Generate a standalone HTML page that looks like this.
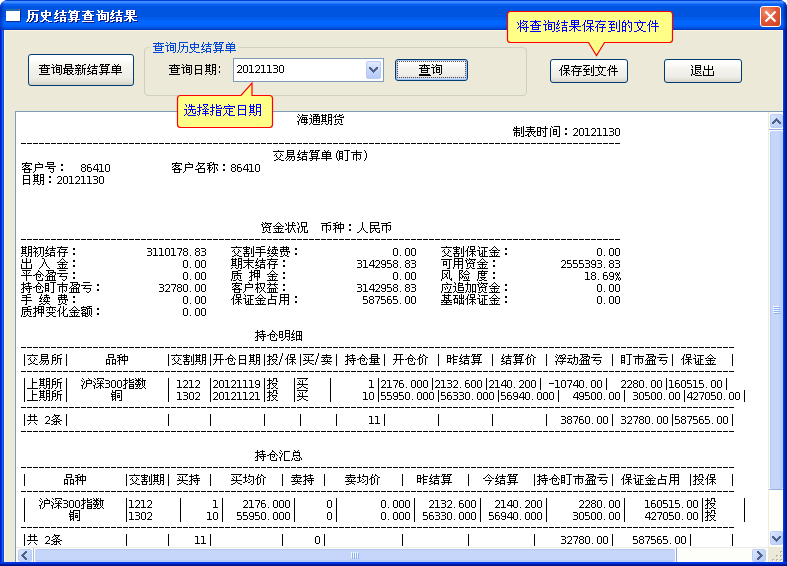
<!DOCTYPE html>
<html><head><meta charset="utf-8"><style>
*{box-sizing:border-box;margin:0;padding:0}
html,body{width:787px;height:566px;overflow:hidden;background:#fff;font-family:"Liberation Sans",sans-serif}
.a{position:absolute}
#win{left:0;top:0;width:787px;height:566px;border-radius:8px 8px 0 0;overflow:hidden;
 background:linear-gradient(to right,#0019CF 0,#0019CF 1px,#0831D9 1px,#0831D9 2px,#166AEE 2px,#166AEE 3px,#0848E0 3px,#0848E0 4px,#0543EF 4px,#0543EF 783px,#0543EF 783px,#0236E0 784px,#001EA8 785px,#001590 786px)}
#title{left:0;top:0;width:787px;height:30px;
 background:linear-gradient(to bottom,#0040D8 0,#0040D8 1px,#3C8CFF 1px,#3C8CFF 3px,#1A70FF 3px,#1A70FF 4px,#0A5EF0 4px,#0A5EF0 6px,#0055E0 6px,#0055E0 17px,#005CEC 17px,#005CEC 20px,#0066FF 20px,#0066FF 25px,#0060F5 25px,#0060F5 27px,#0050E0 27px,#0050E0 29px,#0038C0 29px,#0038C0 30px)}
#client{left:4px;top:30px;width:779px;height:532px;background:#ECE9D8;border-top:1px solid #FFF6DA;border-left:1px solid #FFF9E3;border-right:1px solid #FFF7DA}
#bottom{left:0;top:562px;width:787px;height:4px;background:linear-gradient(to bottom,#0038F0 0,#0038F0 1px,#0030D8 1px,#0030D8 2px,#001A9E 2px,#001A9E 3px,#00138C 3px)}
.btn{border:1px solid #003C74;border-radius:3px;background:linear-gradient(to bottom,#FFFFFF 0,#FEFEFD 15%,#F4F3EE 40%,#EEEDE7 75%,#E3E0D5 90%,#D6D0C5 100%)}
#grp{left:144px;top:47px;width:383px;height:49px;border:1px solid #D0D0BF;border-radius:4px}
#leg{left:149px;top:41px;width:90px;height:13px;background:#ECE9D8}
#combo{left:233px;top:58px;width:151px;height:24px;border:1px solid #7F9DB9;background:#fff}
#ddb{left:366px;top:61px;width:15px;height:18px;border-radius:2px;border:1px solid #B9CBF3;
 background:linear-gradient(to bottom,#E3EBFD,#C6D6FC 50%,#B6CAF8)}
#txt{left:15px;top:111px;width:768px;height:451px;border-left:1px solid #7F9DB9;border-top:1px solid #7F9DB9;background:#fff}
#vs{left:768px;top:112px;width:15px;height:435px;background:linear-gradient(to right,#F3F1EC,#FEFEFB 40%,#FDFDFA 80%,#F0EFE8)}
#hs{left:16px;top:547px;width:752px;height:15px;background:linear-gradient(to bottom,#F0EEE6,#FDFDFA 30%,#FCFCF9 80%,#F3F1EC)}
#grip{left:768px;top:547px;width:15px;height:15px;background:#ECE9D8}
.sbv{border-radius:2px;border:1px solid #BACDF4;background:linear-gradient(135deg,#DCE6FE,#C8D8FC 45%,#B9CDF8)}
.sbh{border-radius:2px;border:1px solid #BACDF4;background:linear-gradient(135deg,#DCE6FE,#C8D8FC 45%,#B9CDF8)}
.thv{border-radius:2px;border-left:1px solid #B4C8F4;background:linear-gradient(to right,#C6D6FB 0,#C6D6FB 70%,#B8CCF6 72%,#B8CCF6 100%)}
.thh{border-radius:2px;border-top:1px solid #B4C8F4;background:linear-gradient(to bottom,#C6D6FB 0,#C6D6FB 80%,#B8CCF6 82%,#B8CCF6 100%)}
.call{background:#FFFF88;border:1px solid #FF0000;border-radius:4px}
svg{position:absolute;left:0;top:0}
</style></head><body>
<div id="win" class="a">
<div id="title" class="a"></div>
<div id="client" class="a"></div>
<div id="bottom" class="a"></div>
<div class="a" style="left:0;top:0;width:4px;height:30px;background:linear-gradient(to right,rgba(0,20,150,.55),rgba(0,30,170,.35) 50%,rgba(0,40,200,.1))"></div>
<div class="a" style="left:783px;top:0;width:4px;height:30px;background:linear-gradient(to right,rgba(0,30,180,.15),rgba(0,20,140,.6) 60%,rgba(0,15,120,.8))"></div>
</div>
<!-- icon -->
<div class="a" style="left:6px;top:9px;width:15px;height:13px;background:#0A2E8C"></div>
<div class="a" style="left:6px;top:9px;width:14px;height:2px;background:#1E6EB0"></div>
<div class="a" style="left:6px;top:11px;width:14px;height:10px;background:#FFFFFF"></div>
<div class="a" style="left:19px;top:9px;width:1px;height:1px;background:#FF7F40"></div>
<!-- close button -->
<div class="a" style="left:760px;top:6px;width:21px;height:21px;border:1px solid #FFFFFF;border-radius:3px;background:radial-gradient(circle at 30% 25%,#F0906E 0,#E2593A 45%,#CC3E1D 100%)"></div>
<svg class="a" width="787" height="566" style="left:0;top:0"><path d="M765.5 11.5L775.5 21.5M775.5 11.5L765.5 21.5" stroke="#fff" stroke-width="2.2" fill="none"/></svg>
<!-- controls -->
<div class="a btn" style="left:28px;top:54px;width:106px;height:32px"></div>
<div id="grp" class="a"></div>
<div id="leg" class="a"></div>
<div id="combo" class="a"></div>
<div id="ddb" class="a"></div>

<div class="a btn" style="left:395px;top:59px;width:73px;height:22px;box-shadow:inset 0 0 0 1px #A6C4F4,inset 0 -1px 0 2px #C6DAFA"></div>
<div class="a" style="left:397px;top:61px;width:69px;height:17px;border:1px dotted #6A4A3A"></div>
<div class="a btn" style="left:550px;top:59px;width:78px;height:24px"></div>
<div class="a btn" style="left:664px;top:59px;width:78px;height:24px"></div>
<!-- text area -->
<div id="txt" class="a"></div>
<div class="a" style="left:768px;top:112px;width:15px;height:435px;background:#FDFDFA;border-left:1px solid #EEECE2"></div>
<div class="a sbv" style="left:770px;top:114px;width:13px;height:14px"></div>
<div class="a" style="left:769px;top:129px;width:14px;height:1px;background:#98AEE0"></div>
<div class="a thv" style="left:770px;top:131px;width:13px;height:358px"></div>
<div class="a" style="left:769px;top:489px;width:14px;height:1px;background:#98AEE0"></div>
<div class="a sbv" style="left:770px;top:531px;width:13px;height:14px"></div>
<div class="a" style="left:16px;top:547px;width:752px;height:15px;background:#FDFDFA;border-top:1px solid #EEEDE5"></div>
<div class="a sbh" style="left:18px;top:549px;width:14px;height:13px"></div>
<div class="a" style="left:33px;top:548px;width:1px;height:14px;background:#A8BCE4"></div>
<div class="a thh" style="left:35px;top:549px;width:640px;height:13px"></div>
<div class="a" style="left:676px;top:548px;width:1px;height:14px;background:#8FA8DC"></div>
<div class="a sbh" style="left:752px;top:549px;width:14px;height:13px"></div>
<div id="grip" class="a"></div>
<svg class="a" width="787" height="566" shape-rendering="crispEdges"><path fill="#4D6185" d="M776 118h1v1h-1zM775 119h3v1h-3zM774 120h5v1h-5zM773 121h3v1h-3zM777 121h3v1h-3zM772 122h3v1h-3zM778 122h3v1h-3zM772 123h2v1h-2zM779 123h2v1h-2zM772 536h2v1h-2zM779 536h2v1h-2zM772 537h3v1h-3zM778 537h3v1h-3zM773 538h3v1h-3zM777 538h3v1h-3zM774 539h5v1h-5zM775 540h3v1h-3zM776 541h1v1h-1zM25 551h2v1h-2zM24 552h3v1h-3zM23 553h3v1h-3zM22 554h3v1h-3zM21 555h3v1h-3zM22 556h3v1h-3zM23 557h3v1h-3zM24 558h3v1h-3zM25 559h2v1h-2zM757 551h2v1h-2zM757 552h3v1h-3zM758 553h3v1h-3zM759 554h3v1h-3zM760 555h3v1h-3zM759 556h3v1h-3zM758 557h3v1h-3zM757 558h3v1h-3zM757 559h2v1h-2zM369 67h2v1h-2zM376 67h2v1h-2zM369 68h3v1h-3zM375 68h3v1h-3zM370 69h3v1h-3zM374 69h3v1h-3zM371 70h5v1h-5zM372 71h3v1h-3zM373 72h1v1h-1z"/></svg>
<svg class="a" width="787" height="566" shape-rendering="crispEdges">
<g fill="#F4F8FF"><rect x="773" y="306" width="6" height="1"/><rect x="773" y="308" width="6" height="1"/><rect x="773" y="310" width="6" height="1"/><rect x="773" y="312" width="6" height="1"/>
<rect x="351" y="552" width="1" height="6"/><rect x="353" y="552" width="1" height="6"/><rect x="355" y="552" width="1" height="6"/><rect x="357" y="552" width="1" height="6"/></g>
<g fill="#8CB0F4"><rect x="774" y="307" width="6" height="1"/><rect x="774" y="309" width="6" height="1"/><rect x="774" y="311" width="6" height="1"/><rect x="774" y="313" width="6" height="1"/>
<rect x="352" y="553" width="1" height="6"/><rect x="354" y="553" width="1" height="6"/><rect x="356" y="553" width="1" height="6"/><rect x="358" y="553" width="1" height="6"/></g>
<g fill="#B9B4A2"><rect x="780" y="551" width="2" height="2"/><rect x="776" y="555" width="2" height="2"/><rect x="780" y="555" width="2" height="2"/><rect x="772" y="559" width="2" height="2"/><rect x="776" y="559" width="2" height="2"/><rect x="780" y="559" width="2" height="2"/></g>
<g fill="#FFFFFF"><rect x="781" y="552" width="1" height="1"/><rect x="777" y="556" width="1" height="1"/><rect x="781" y="556" width="1" height="1"/><rect x="773" y="560" width="1" height="1"/><rect x="777" y="560" width="1" height="1"/><rect x="781" y="560" width="1" height="1"/></g>
</svg>
<svg class="a" width="787" height="566" shape-rendering="crispEdges">
<defs><path id="g0" d="M1 -10h1v1h-1zM5 -10h1v1h-1zM2 -9h1v1h-1zM5 -9h6v1h-6zM0 -8h1v1h-1zM4 -8h1v1h-1zM1 -7h1v1h-1zM3 -7h1v1h-1zM5 -7h5v1h-5zM3 -6h1v1h-1zM5 -6h1v1h-1zM7 -6h1v1h-1zM9 -6h1v1h-1zM2 -5h1v1h-1zM4 -5h7v1h-7zM2 -4h1v1h-1zM4 -4h1v1h-1zM7 -4h1v1h-1zM9 -4h1v1h-1zM0 -3h2v1h-2zM4 -3h1v1h-1zM7 -3h1v1h-1zM9 -3h1v1h-1zM1 -2h1v1h-1zM4 -2h7v1h-7zM1 -1h1v1h-1zM9 -1h1v1h-1zM1 0h1v1h-1zM7 0h2v1h-2z"/><path id="g1" d="M1 -10h1v1h-1zM4 -10h6v1h-6zM2 -9h1v1h-1zM6 -9h1v1h-1zM8 -9h1v1h-1zM2 -8h1v1h-1zM4 -8h7v1h-7zM4 -7h1v1h-1zM7 -7h1v1h-1zM10 -7h1v1h-1zM0 -6h3v1h-3zM4 -6h7v1h-7zM2 -5h1v1h-1zM4 -5h1v1h-1zM7 -5h1v1h-1zM10 -5h1v1h-1zM2 -4h1v1h-1zM4 -4h7v1h-7zM2 -3h1v1h-1zM4 -3h1v1h-1zM7 -3h1v1h-1zM10 -3h1v1h-1zM2 -2h1v1h-1zM4 -2h1v1h-1zM7 -2h1v1h-1zM9 -2h2v1h-2zM1 -1h1v1h-1zM3 -1h1v1h-1zM0 0h1v1h-1zM4 0h7v1h-7z"/><path id="g2" d="M1 -10h1v1h-1zM4 -10h1v1h-1zM7 -10h4v1h-4zM0 -9h6v1h-6zM7 -9h1v1h-1zM10 -9h1v1h-1zM1 -8h1v1h-1zM4 -8h1v1h-1zM7 -8h1v1h-1zM10 -8h1v1h-1zM1 -7h4v1h-4zM7 -7h4v1h-4zM1 -6h1v1h-1zM4 -6h1v1h-1zM7 -6h1v1h-1zM10 -6h1v1h-1zM1 -5h4v1h-4zM7 -5h1v1h-1zM10 -5h1v1h-1zM1 -4h1v1h-1zM4 -4h1v1h-1zM7 -4h4v1h-4zM0 -3h6v1h-6zM7 -3h1v1h-1zM10 -3h1v1h-1zM7 -2h1v1h-1zM10 -2h1v1h-1zM1 -1h1v1h-1zM4 -1h1v1h-1zM7 -1h1v1h-1zM10 -1h1v1h-1zM0 0h1v1h-1zM5 0h2v1h-2zM9 0h2v1h-2z"/><path id="g3" d="M3 -10h1v1h-1zM6 -10h1v1h-1zM9 -10h1v1h-1zM2 -9h1v1h-1zM6 -9h3v1h-3zM1 -8h2v1h-2zM4 -8h3v1h-3zM10 -8h1v1h-1zM0 -7h1v1h-1zM2 -7h1v1h-1zM7 -7h4v1h-4zM2 -5h7v1h-7zM2 -4h1v1h-1zM8 -4h1v1h-1zM2 -3h1v1h-1zM5 -3h1v1h-1zM8 -3h1v1h-1zM2 -2h1v1h-1zM5 -2h1v1h-1zM8 -2h1v1h-1zM4 -1h1v1h-1zM6 -1h1v1h-1zM1 0h3v1h-3zM7 0h3v1h-3z"/><path id="g4" d="M3 -10h1v1h-1zM10 -10h1v1h-1zM1 -9h1v1h-1zM3 -9h1v1h-1zM8 -9h1v1h-1zM10 -9h1v1h-1zM1 -8h6v1h-6zM8 -8h1v1h-1zM10 -8h1v1h-1zM0 -7h1v1h-1zM3 -7h1v1h-1zM8 -7h1v1h-1zM10 -7h1v1h-1zM0 -6h7v1h-7zM8 -6h1v1h-1zM10 -6h1v1h-1zM3 -5h1v1h-1zM8 -5h1v1h-1zM10 -5h1v1h-1zM1 -4h6v1h-6zM8 -4h1v1h-1zM10 -4h1v1h-1zM1 -3h1v1h-1zM3 -3h1v1h-1zM6 -3h1v1h-1zM8 -3h1v1h-1zM10 -3h1v1h-1zM1 -2h1v1h-1zM3 -2h1v1h-1zM6 -2h1v1h-1zM10 -2h1v1h-1zM1 -1h1v1h-1zM3 -1h1v1h-1zM5 -1h2v1h-2zM10 -1h1v1h-1zM3 0h1v1h-1zM8 0h3v1h-3z"/><path id="g5" d="M5 -10h1v1h-1zM1 -9h9v1h-9zM5 -8h1v1h-1zM2 -7h7v1h-7zM5 -6h1v1h-1zM0 -5h11v1h-11zM4 -4h1v1h-1zM6 -4h1v1h-1zM9 -4h1v1h-1zM3 -3h1v1h-1zM6 -3h1v1h-1zM8 -3h1v1h-1zM2 -2h2v1h-2zM7 -2h1v1h-1zM0 -1h2v1h-2zM3 -1h1v1h-1zM5 -1h1v1h-1zM8 -1h1v1h-1zM3 0h2v1h-2zM9 0h2v1h-2z"/><path id="g6" d="M8 -10h1v1h-1zM0 -9h4v1h-4zM8 -9h1v1h-1zM0 -8h1v1h-1zM3 -8h8v1h-8zM0 -7h1v1h-1zM3 -7h1v1h-1zM8 -7h1v1h-1zM0 -6h1v1h-1zM3 -6h1v1h-1zM5 -6h1v1h-1zM8 -6h1v1h-1zM0 -5h4v1h-4zM6 -5h1v1h-1zM8 -5h1v1h-1zM0 -4h1v1h-1zM3 -4h1v1h-1zM6 -4h1v1h-1zM8 -4h1v1h-1zM0 -3h1v1h-1zM3 -3h1v1h-1zM8 -3h1v1h-1zM0 -2h1v1h-1zM3 -2h1v1h-1zM8 -2h1v1h-1zM0 -1h4v1h-4zM8 -1h1v1h-1zM6 0h3v1h-3z"/><path id="g7" d="M2 -10h1v1h-1zM5 -10h6v1h-6zM3 -9h1v1h-1zM10 -9h1v1h-1zM1 -8h1v1h-1zM10 -8h1v1h-1zM1 -7h1v1h-1zM4 -7h4v1h-4zM10 -7h1v1h-1zM1 -6h1v1h-1zM4 -6h1v1h-1zM7 -6h1v1h-1zM10 -6h1v1h-1zM1 -5h1v1h-1zM4 -5h4v1h-4zM10 -5h1v1h-1zM1 -4h1v1h-1zM4 -4h1v1h-1zM7 -4h1v1h-1zM10 -4h1v1h-1zM1 -3h1v1h-1zM4 -3h1v1h-1zM7 -3h1v1h-1zM10 -3h1v1h-1zM1 -2h1v1h-1zM4 -2h4v1h-4zM10 -2h1v1h-1zM1 -1h1v1h-1zM10 -1h1v1h-1zM1 0h1v1h-1zM8 0h3v1h-3z"/><path id="g8" d="M4 -8h2v1h-2zM4 -7h2v1h-2zM4 -3h2v1h-2zM4 -2h2v1h-2z"/><path id="g9" d="M1 -8h3v1h-3zM0 -7h1v1h-1zM4 -7h1v1h-1zM4 -6h1v1h-1zM4 -5h1v1h-1zM3 -4h1v1h-1zM2 -3h1v1h-1zM1 -2h1v1h-1zM0 -1h5v1h-5z"/><path id="g10" d="M1 -8h3v1h-3zM0 -7h1v1h-1zM4 -7h1v1h-1zM0 -6h1v1h-1zM4 -6h1v1h-1zM0 -5h1v1h-1zM4 -5h1v1h-1zM0 -4h1v1h-1zM4 -4h1v1h-1zM0 -3h1v1h-1zM4 -3h1v1h-1zM0 -2h1v1h-1zM4 -2h1v1h-1zM1 -1h3v1h-3z"/><path id="g11" d="M0 -8h3v1h-3zM2 -7h1v1h-1zM2 -6h1v1h-1zM2 -5h1v1h-1zM2 -4h1v1h-1zM2 -3h1v1h-1zM2 -2h1v1h-1zM0 -1h5v1h-5z"/><path id="g12" d="M0 -8h4v1h-4zM4 -7h1v1h-1zM4 -6h1v1h-1zM1 -5h3v1h-3zM4 -4h1v1h-1zM4 -3h1v1h-1zM4 -2h1v1h-1zM0 -1h4v1h-4z"/><path id="g13" d="M0 -5h5v1h-5z"/><path id="g14" d="M5 -10h1v1h-1zM0 -9h11v1h-11zM3 -7h1v1h-1zM7 -7h1v1h-1zM2 -6h1v1h-1zM8 -6h1v1h-1zM1 -5h1v1h-1zM3 -5h1v1h-1zM7 -5h1v1h-1zM9 -5h1v1h-1zM3 -4h1v1h-1zM7 -4h1v1h-1zM4 -3h1v1h-1zM6 -3h1v1h-1zM5 -2h1v1h-1zM3 -1h2v1h-2zM6 -1h2v1h-2zM1 0h2v1h-2zM8 0h3v1h-3z"/><path id="g15" d="M2 -10h7v1h-7zM2 -9h1v1h-1zM8 -9h1v1h-1zM2 -8h7v1h-7zM2 -7h1v1h-1zM8 -7h1v1h-1zM2 -6h7v1h-7zM2 -5h1v1h-1zM2 -4h8v1h-8zM1 -3h1v1h-1zM4 -3h1v1h-1zM6 -3h1v1h-1zM9 -3h1v1h-1zM0 -2h1v1h-1zM3 -2h1v1h-1zM6 -2h1v1h-1zM9 -2h1v1h-1zM2 -1h1v1h-1zM5 -1h1v1h-1zM9 -1h1v1h-1zM1 0h1v1h-1zM4 0h1v1h-1zM7 0h2v1h-2z"/><path id="g16" d="M2 -10h1v1h-1zM7 -10h1v1h-1zM2 -9h1v1h-1zM7 -9h1v1h-1zM1 -8h1v1h-1zM4 -8h7v1h-7zM1 -7h1v1h-1zM3 -7h1v1h-1zM7 -7h1v1h-1zM0 -6h3v1h-3zM5 -6h5v1h-5zM2 -5h1v1h-1zM1 -4h1v1h-1zM5 -4h5v1h-5zM0 -3h4v1h-4zM5 -3h1v1h-1zM9 -3h1v1h-1zM4 -2h2v1h-2zM9 -2h1v1h-1zM2 -1h2v1h-2zM5 -1h5v1h-5zM0 0h2v1h-2zM5 0h1v1h-1zM9 0h1v1h-1z"/><path id="g17" d="M1 -10h4v1h-4zM6 -10h5v1h-5zM1 -9h1v1h-1zM3 -9h1v1h-1zM6 -9h1v1h-1zM9 -9h1v1h-1zM0 -8h1v1h-1zM2 -8h7v1h-7zM2 -7h1v1h-1zM8 -7h1v1h-1zM2 -6h7v1h-7zM2 -5h1v1h-1zM8 -5h1v1h-1zM2 -4h7v1h-7zM3 -3h1v1h-1zM7 -3h1v1h-1zM0 -2h11v1h-11zM3 -1h1v1h-1zM7 -1h1v1h-1zM1 0h2v1h-2zM7 0h1v1h-1z"/><path id="g18" d="M3 -10h1v1h-1zM7 -10h1v1h-1zM4 -9h1v1h-1zM6 -9h1v1h-1zM1 -8h9v1h-9zM1 -7h1v1h-1zM5 -7h1v1h-1zM9 -7h1v1h-1zM1 -6h9v1h-9zM1 -5h1v1h-1zM5 -5h1v1h-1zM9 -5h1v1h-1zM1 -4h9v1h-9zM5 -3h1v1h-1zM0 -2h11v1h-11zM5 -1h1v1h-1zM5 0h1v1h-1z"/><path id="g19" d="M5 -10h1v1h-1zM4 -9h1v1h-1zM4 -8h1v1h-1zM3 -7h1v1h-1zM3 -6h1v1h-1zM3 -5h1v1h-1zM3 -4h1v1h-1zM3 -3h1v1h-1zM4 -2h1v1h-1zM4 -1h1v1h-1zM5 0h1v1h-1z"/><path id="g20" d="M5 -10h6v1h-6zM0 -9h4v1h-4zM8 -9h1v1h-1zM0 -8h1v1h-1zM3 -8h1v1h-1zM8 -8h1v1h-1zM0 -7h4v1h-4zM8 -7h1v1h-1zM0 -6h1v1h-1zM3 -6h1v1h-1zM8 -6h1v1h-1zM0 -5h1v1h-1zM3 -5h1v1h-1zM8 -5h1v1h-1zM0 -4h4v1h-4zM8 -4h1v1h-1zM0 -3h1v1h-1zM3 -3h1v1h-1zM8 -3h1v1h-1zM0 -2h4v1h-4zM8 -2h1v1h-1zM0 -1h1v1h-1zM3 -1h1v1h-1zM8 -1h1v1h-1zM6 0h3v1h-3z"/><path id="g21" d="M5 -10h1v1h-1zM5 -9h1v1h-1zM0 -8h11v1h-11zM5 -7h1v1h-1zM2 -6h8v1h-8zM2 -5h1v1h-1zM5 -5h1v1h-1zM9 -5h1v1h-1zM2 -4h1v1h-1zM5 -4h1v1h-1zM9 -4h1v1h-1zM2 -3h1v1h-1zM5 -3h1v1h-1zM9 -3h1v1h-1zM2 -2h1v1h-1zM5 -2h1v1h-1zM7 -2h1v1h-1zM9 -2h1v1h-1zM2 -1h1v1h-1zM5 -1h1v1h-1zM8 -1h1v1h-1zM5 0h1v1h-1z"/><path id="g22" d="M1 -10h1v1h-1zM2 -9h1v1h-1zM2 -8h1v1h-1zM3 -7h1v1h-1zM3 -6h1v1h-1zM3 -5h1v1h-1zM3 -4h1v1h-1zM3 -3h1v1h-1zM2 -2h1v1h-1zM2 -1h1v1h-1zM1 0h1v1h-1z"/><path id="g23" d="M5 -10h1v1h-1zM1 -9h10v1h-10zM1 -8h1v1h-1zM4 -8h1v1h-1zM10 -8h1v1h-1zM3 -7h6v1h-6zM2 -6h1v1h-1zM4 -6h1v1h-1zM7 -6h1v1h-1zM1 -5h1v1h-1zM5 -5h2v1h-2zM3 -4h2v1h-2zM7 -4h2v1h-2zM1 -3h10v1h-10zM3 -2h1v1h-1zM8 -2h1v1h-1zM3 -1h1v1h-1zM8 -1h1v1h-1zM3 0h6v1h-6z"/><path id="g24" d="M5 -10h1v1h-1zM6 -9h1v1h-1zM2 -8h8v1h-8zM2 -7h1v1h-1zM9 -7h1v1h-1zM2 -6h1v1h-1zM9 -6h1v1h-1zM2 -5h8v1h-8zM2 -4h1v1h-1zM2 -3h1v1h-1zM2 -2h1v1h-1zM1 -1h1v1h-1zM0 0h1v1h-1z"/><path id="g25" d="M2 -10h7v1h-7zM2 -9h1v1h-1zM8 -9h1v1h-1zM2 -8h7v1h-7zM0 -6h11v1h-11zM4 -5h1v1h-1zM3 -4h6v1h-6zM8 -3h1v1h-1zM8 -2h1v1h-1zM5 -1h1v1h-1zM8 -1h1v1h-1zM6 0h2v1h-2z"/><path id="g26" d="M1 -8h3v1h-3zM0 -7h1v1h-1zM4 -7h1v1h-1zM0 -6h1v1h-1zM4 -6h1v1h-1zM1 -5h3v1h-3zM0 -4h1v1h-1zM4 -4h1v1h-1zM0 -3h1v1h-1zM4 -3h1v1h-1zM0 -2h1v1h-1zM4 -2h1v1h-1zM1 -1h3v1h-3z"/><path id="g27" d="M1 -8h3v1h-3zM0 -7h1v1h-1zM0 -6h1v1h-1zM0 -5h4v1h-4zM0 -4h1v1h-1zM4 -4h1v1h-1zM0 -3h1v1h-1zM4 -3h1v1h-1zM0 -2h1v1h-1zM4 -2h1v1h-1zM1 -1h3v1h-3z"/><path id="g28" d="M3 -8h2v1h-2zM2 -7h1v1h-1zM4 -7h1v1h-1zM1 -6h1v1h-1zM4 -6h1v1h-1zM1 -5h1v1h-1zM4 -5h1v1h-1zM0 -4h1v1h-1zM4 -4h1v1h-1zM0 -3h6v1h-6zM4 -2h1v1h-1zM4 -1h1v1h-1z"/><path id="g29" d="M3 -10h1v1h-1zM3 -9h7v1h-7zM3 -8h1v1h-1zM8 -8h1v1h-1zM2 -7h1v1h-1zM4 -7h1v1h-1zM7 -7h1v1h-1zM1 -6h1v1h-1zM5 -6h2v1h-2zM5 -5h1v1h-1zM3 -4h7v1h-7zM0 -3h4v1h-4zM9 -3h1v1h-1zM3 -2h1v1h-1zM9 -2h1v1h-1zM3 -1h1v1h-1zM9 -1h1v1h-1zM3 0h7v1h-7z"/><path id="g30" d="M3 -10h2v1h-2zM6 -10h1v1h-1zM0 -9h3v1h-3zM6 -9h1v1h-1zM2 -8h1v1h-1zM5 -8h6v1h-6zM0 -7h5v1h-5zM7 -7h1v1h-1zM10 -7h1v1h-1zM2 -6h1v1h-1zM7 -6h1v1h-1zM1 -5h3v1h-3zM5 -5h1v1h-1zM7 -5h1v1h-1zM9 -5h1v1h-1zM1 -4h2v1h-2zM5 -4h1v1h-1zM7 -4h1v1h-1zM9 -4h1v1h-1zM0 -3h1v1h-1zM2 -3h1v1h-1zM4 -3h1v1h-1zM7 -3h1v1h-1zM10 -3h1v1h-1zM2 -2h2v1h-2zM7 -2h1v1h-1zM10 -2h1v1h-1zM2 -1h1v1h-1zM7 -1h1v1h-1zM2 0h1v1h-1zM6 0h2v1h-2z"/><path id="g31" d="M2 -9h7v1h-7zM2 -8h1v1h-1zM8 -8h1v1h-1zM2 -7h1v1h-1zM8 -7h1v1h-1zM2 -6h1v1h-1zM8 -6h1v1h-1zM2 -5h7v1h-7zM2 -4h1v1h-1zM8 -4h1v1h-1zM2 -3h1v1h-1zM8 -3h1v1h-1zM2 -2h1v1h-1zM8 -2h1v1h-1zM2 -1h7v1h-7zM2 0h1v1h-1zM8 0h1v1h-1z"/><path id="g32" d="M1 -10h1v1h-1zM4 -10h1v1h-1zM2 -9h1v1h-1zM4 -9h7v1h-7zM0 -8h2v1h-2zM3 -8h1v1h-1zM6 -8h1v1h-1zM9 -8h1v1h-1zM1 -7h1v1h-1zM5 -7h1v1h-1zM7 -7h1v1h-1zM1 -6h1v1h-1zM4 -6h1v1h-1zM8 -6h2v1h-2zM2 -5h7v1h-7zM2 -4h1v1h-1zM8 -4h1v1h-1zM2 -3h1v1h-1zM5 -3h1v1h-1zM8 -3h1v1h-1zM2 -2h1v1h-1zM5 -2h1v1h-1zM8 -2h1v1h-1zM4 -1h1v1h-1zM6 -1h1v1h-1zM1 0h3v1h-3zM7 0h3v1h-3z"/><path id="g33" d="M5 -10h1v1h-1zM4 -9h1v1h-1zM6 -9h1v1h-1zM3 -8h1v1h-1zM7 -8h1v1h-1zM2 -7h1v1h-1zM8 -7h1v1h-1zM0 -6h2v1h-2zM3 -6h5v1h-5zM9 -6h2v1h-2zM5 -5h1v1h-1zM1 -4h9v1h-9zM5 -3h1v1h-1zM2 -2h1v1h-1zM5 -2h1v1h-1zM8 -2h1v1h-1zM3 -1h1v1h-1zM5 -1h1v1h-1zM7 -1h1v1h-1zM0 0h11v1h-11z"/><path id="g34" d="M3 -10h1v1h-1zM7 -10h2v1h-2zM0 -9h1v1h-1zM3 -9h1v1h-1zM7 -9h1v1h-1zM9 -9h1v1h-1zM1 -8h1v1h-1zM3 -8h1v1h-1zM7 -8h1v1h-1zM1 -7h1v1h-1zM3 -7h8v1h-8zM3 -6h1v1h-1zM7 -6h1v1h-1zM3 -5h1v1h-1zM7 -5h1v1h-1zM2 -4h2v1h-2zM6 -4h1v1h-1zM8 -4h1v1h-1zM0 -3h2v1h-2zM3 -3h1v1h-1zM6 -3h1v1h-1zM8 -3h1v1h-1zM3 -2h1v1h-1zM5 -2h1v1h-1zM9 -2h1v1h-1zM3 -1h1v1h-1zM5 -1h1v1h-1zM9 -1h1v1h-1zM3 0h2v1h-2zM10 0h1v1h-1z"/><path id="g35" d="M0 -10h1v1h-1zM4 -10h6v1h-6zM1 -9h1v1h-1zM4 -9h1v1h-1zM9 -9h1v1h-1zM1 -8h1v1h-1zM4 -8h1v1h-1zM9 -8h1v1h-1zM4 -7h1v1h-1zM9 -7h1v1h-1zM2 -6h1v1h-1zM4 -6h6v1h-6zM2 -5h1v1h-1zM5 -5h1v1h-1zM7 -5h1v1h-1zM0 -4h2v1h-2zM5 -4h1v1h-1zM7 -4h1v1h-1zM1 -3h1v1h-1zM5 -3h1v1h-1zM7 -3h1v1h-1zM1 -2h1v1h-1zM5 -2h1v1h-1zM7 -2h1v1h-1zM10 -2h1v1h-1zM1 -1h1v1h-1zM4 -1h1v1h-1zM7 -1h1v1h-1zM10 -1h1v1h-1zM1 0h1v1h-1zM3 0h1v1h-1zM7 0h4v1h-4z"/><path id="g36" d="M7 -10h3v1h-3zM0 -9h7v1h-7zM5 -8h1v1h-1zM1 -7h9v1h-9zM1 -6h1v1h-1zM5 -6h1v1h-1zM9 -6h1v1h-1zM1 -5h1v1h-1zM5 -5h1v1h-1zM9 -5h1v1h-1zM1 -4h1v1h-1zM5 -4h1v1h-1zM9 -4h1v1h-1zM1 -3h1v1h-1zM5 -3h1v1h-1zM7 -3h1v1h-1zM9 -3h1v1h-1zM1 -2h1v1h-1zM5 -2h1v1h-1zM8 -2h1v1h-1zM5 -1h1v1h-1zM5 0h1v1h-1z"/><path id="g37" d="M3 -10h2v1h-2zM7 -10h1v1h-1zM0 -9h3v1h-3zM7 -9h1v1h-1zM2 -8h1v1h-1zM5 -8h6v1h-6zM0 -7h6v1h-6zM7 -7h1v1h-1zM10 -7h1v1h-1zM2 -6h1v1h-1zM5 -6h1v1h-1zM7 -6h1v1h-1zM10 -6h1v1h-1zM2 -5h2v1h-2zM5 -5h1v1h-1zM7 -5h1v1h-1zM10 -5h1v1h-1zM1 -4h2v1h-2zM4 -4h7v1h-7zM0 -3h1v1h-1zM2 -3h1v1h-1zM7 -3h1v1h-1zM2 -2h1v1h-1zM7 -2h1v1h-1zM2 -1h1v1h-1zM7 -1h1v1h-1zM2 0h1v1h-1zM7 0h1v1h-1z"/><path id="g38" d="M5 -10h1v1h-1zM5 -9h1v1h-1zM5 -8h1v1h-1zM5 -7h1v1h-1zM5 -6h1v1h-1zM5 -5h1v1h-1zM4 -4h1v1h-1zM6 -4h1v1h-1zM4 -3h1v1h-1zM6 -3h1v1h-1zM3 -2h1v1h-1zM7 -2h1v1h-1zM2 -1h1v1h-1zM8 -1h1v1h-1zM0 0h2v1h-2zM9 0h2v1h-2z"/><path id="g39" d="M1 -10h9v1h-9zM1 -9h1v1h-1zM9 -9h1v1h-1zM1 -8h1v1h-1zM9 -8h1v1h-1zM1 -7h9v1h-9zM1 -6h1v1h-1zM5 -6h1v1h-1zM1 -5h1v1h-1zM5 -5h1v1h-1zM1 -4h10v1h-10zM1 -3h1v1h-1zM6 -3h1v1h-1zM1 -2h1v1h-1zM4 -2h1v1h-1zM6 -2h1v1h-1zM10 -2h1v1h-1zM1 -1h1v1h-1zM3 -1h1v1h-1zM7 -1h1v1h-1zM10 -1h1v1h-1zM1 0h2v1h-2zM8 0h3v1h-3z"/><path id="g40" d="M1 -10h1v1h-1zM2 -9h1v1h-1zM5 -9h6v1h-6zM0 -8h5v1h-5zM7 -8h1v1h-1zM10 -8h1v1h-1zM3 -7h1v1h-1zM7 -7h1v1h-1zM10 -7h1v1h-1zM2 -6h1v1h-1zM7 -6h1v1h-1zM10 -6h1v1h-1zM1 -5h2v1h-2zM4 -5h1v1h-1zM7 -5h1v1h-1zM10 -5h1v1h-1zM0 -4h1v1h-1zM2 -4h2v1h-2zM7 -4h1v1h-1zM10 -4h1v1h-1zM2 -3h1v1h-1zM4 -3h1v1h-1zM7 -3h1v1h-1zM10 -3h1v1h-1zM2 -2h1v1h-1zM6 -2h1v1h-1zM10 -2h1v1h-1zM2 -1h1v1h-1zM5 -1h1v1h-1zM10 -1h1v1h-1zM2 0h1v1h-1zM4 0h1v1h-1zM8 0h2v1h-2z"/><path id="g41" d="M4 -10h1v1h-1zM0 -9h11v1h-11zM3 -8h1v1h-1zM2 -7h1v1h-1zM4 -7h6v1h-6zM2 -6h1v1h-1zM8 -6h1v1h-1zM1 -5h2v1h-2zM7 -5h1v1h-1zM0 -4h1v1h-1zM2 -4h9v1h-9zM2 -3h1v1h-1zM7 -3h1v1h-1zM2 -2h1v1h-1zM7 -2h1v1h-1zM2 -1h1v1h-1zM7 -1h1v1h-1zM2 0h1v1h-1zM5 0h3v1h-3z"/><path id="g42" d="M0 -8h5v1h-5zM4 -7h1v1h-1zM4 -6h1v1h-1zM3 -5h1v1h-1zM3 -4h1v1h-1zM2 -3h1v1h-1zM2 -2h1v1h-1zM2 -1h1v1h-1z"/><path id="g43" d="M1 -1h1v1h-1z"/><path id="g44" d="M3 -10h1v1h-1zM10 -10h1v1h-1zM0 -9h7v1h-7zM10 -9h1v1h-1zM0 -8h1v1h-1zM3 -8h1v1h-1zM6 -8h1v1h-1zM8 -8h1v1h-1zM10 -8h1v1h-1zM1 -7h5v1h-5zM8 -7h1v1h-1zM10 -7h1v1h-1zM3 -6h1v1h-1zM8 -6h1v1h-1zM10 -6h1v1h-1zM1 -5h5v1h-5zM8 -5h1v1h-1zM10 -5h1v1h-1zM3 -4h1v1h-1zM8 -4h1v1h-1zM10 -4h1v1h-1zM0 -3h7v1h-7zM8 -3h1v1h-1zM10 -3h1v1h-1zM1 -2h1v1h-1zM5 -2h1v1h-1zM10 -2h1v1h-1zM1 -1h1v1h-1zM5 -1h1v1h-1zM10 -1h1v1h-1zM1 0h5v1h-5zM8 0h3v1h-3z"/><path id="g45" d="M6 -10h4v1h-4zM1 -9h5v1h-5zM5 -8h1v1h-1zM1 -7h9v1h-9zM5 -6h1v1h-1zM5 -5h1v1h-1zM0 -4h11v1h-11zM5 -3h1v1h-1zM5 -2h1v1h-1zM5 -1h1v1h-1zM4 0h2v1h-2z"/><path id="g46" d="M2 -10h1v1h-1zM7 -10h1v1h-1zM2 -9h1v1h-1zM5 -9h5v1h-5zM1 -8h1v1h-1zM7 -8h1v1h-1zM1 -7h1v1h-1zM3 -7h1v1h-1zM5 -7h6v1h-6zM0 -6h3v1h-3zM5 -6h1v1h-1zM8 -6h1v1h-1zM10 -6h1v1h-1zM2 -5h1v1h-1zM4 -5h1v1h-1zM6 -5h1v1h-1zM8 -5h1v1h-1zM1 -4h1v1h-1zM5 -4h1v1h-1zM8 -4h1v1h-1zM0 -3h3v1h-3zM4 -3h7v1h-7zM7 -2h1v1h-1zM2 -1h2v1h-2zM6 -1h1v1h-1zM8 -1h2v1h-2zM0 0h2v1h-2zM4 0h2v1h-2zM10 0h1v1h-1z"/><path id="g47" d="M4 -10h1v1h-1zM7 -10h1v1h-1zM1 -9h9v1h-9zM4 -8h1v1h-1zM7 -8h1v1h-1zM9 -8h1v1h-1zM1 -7h9v1h-9zM1 -6h1v1h-1zM4 -6h1v1h-1zM7 -6h1v1h-1zM1 -5h10v1h-10zM2 -4h1v1h-1zM8 -4h1v1h-1zM10 -4h1v1h-1zM2 -3h1v1h-1zM5 -3h1v1h-1zM8 -3h1v1h-1zM2 -2h1v1h-1zM5 -2h1v1h-1zM8 -2h1v1h-1zM4 -1h1v1h-1zM6 -1h2v1h-2zM1 0h3v1h-3zM8 0h2v1h-2z"/><path id="g48" d="M3 -10h1v1h-1zM5 -10h5v1h-5zM3 -9h1v1h-1zM5 -9h1v1h-1zM9 -9h1v1h-1zM2 -8h1v1h-1zM5 -8h1v1h-1zM9 -8h1v1h-1zM2 -7h1v1h-1zM5 -7h5v1h-5zM1 -6h2v1h-2zM7 -6h1v1h-1zM0 -5h1v1h-1zM2 -5h1v1h-1zM4 -5h7v1h-7zM2 -4h1v1h-1zM7 -4h1v1h-1zM2 -3h1v1h-1zM6 -3h3v1h-3zM2 -2h1v1h-1zM5 -2h1v1h-1zM7 -2h1v1h-1zM9 -2h1v1h-1zM2 -1h1v1h-1zM4 -1h1v1h-1zM7 -1h1v1h-1zM10 -1h1v1h-1zM2 0h1v1h-1zM7 0h1v1h-1z"/><path id="g49" d="M1 -10h1v1h-1zM2 -9h1v1h-1zM4 -9h7v1h-7zM2 -8h1v1h-1zM7 -8h1v1h-1zM7 -7h1v1h-1zM0 -6h3v1h-3zM5 -6h1v1h-1zM7 -6h1v1h-1zM2 -5h1v1h-1zM5 -5h1v1h-1zM7 -5h3v1h-3zM2 -4h1v1h-1zM5 -4h1v1h-1zM7 -4h1v1h-1zM2 -3h1v1h-1zM4 -3h2v1h-2zM7 -3h1v1h-1zM2 -2h2v1h-2zM5 -2h1v1h-1zM7 -2h1v1h-1zM2 -1h1v1h-1zM5 -1h1v1h-1zM7 -1h1v1h-1zM3 0h8v1h-8z"/><path id="g50" d="M5 -10h1v1h-1zM1 -9h1v1h-1zM5 -9h1v1h-1zM9 -9h1v1h-1zM1 -8h1v1h-1zM5 -8h1v1h-1zM9 -8h1v1h-1zM1 -7h1v1h-1zM5 -7h1v1h-1zM9 -7h1v1h-1zM1 -6h9v1h-9zM5 -5h1v1h-1zM0 -4h1v1h-1zM5 -4h1v1h-1zM10 -4h1v1h-1zM0 -3h1v1h-1zM5 -3h1v1h-1zM10 -3h1v1h-1zM0 -2h1v1h-1zM5 -2h1v1h-1zM10 -2h1v1h-1zM0 -1h1v1h-1zM5 -1h1v1h-1zM10 -1h1v1h-1zM0 0h11v1h-11z"/><path id="g51" d="M3 -10h2v1h-2zM5 -9h1v1h-1zM5 -8h1v1h-1zM5 -7h1v1h-1zM4 -6h1v1h-1zM6 -6h1v1h-1zM4 -5h1v1h-1zM6 -5h1v1h-1zM3 -4h1v1h-1zM7 -4h1v1h-1zM3 -3h1v1h-1zM7 -3h1v1h-1zM2 -2h1v1h-1zM8 -2h1v1h-1zM1 -1h1v1h-1zM9 -1h1v1h-1zM0 0h1v1h-1zM10 0h1v1h-1z"/><path id="g52" d="M5 -10h1v1h-1zM5 -9h1v1h-1zM0 -8h11v1h-11zM5 -7h1v1h-1zM1 -6h9v1h-9zM5 -5h1v1h-1zM4 -4h3v1h-3zM3 -3h1v1h-1zM5 -3h1v1h-1zM7 -3h1v1h-1zM2 -2h1v1h-1zM5 -2h1v1h-1zM8 -2h1v1h-1zM0 -1h2v1h-2zM5 -1h1v1h-1zM9 -1h2v1h-2zM5 0h1v1h-1z"/><path id="g53" d="M1 -8h3v1h-3zM0 -7h1v1h-1zM4 -7h1v1h-1zM0 -6h1v1h-1zM4 -6h1v1h-1zM0 -5h1v1h-1zM4 -5h1v1h-1zM1 -4h4v1h-4zM4 -3h1v1h-1zM0 -2h1v1h-1zM4 -2h1v1h-1zM1 -1h3v1h-3z"/><path id="g54" d="M0 -8h4v1h-4zM0 -7h1v1h-1zM0 -6h1v1h-1zM0 -5h4v1h-4zM4 -4h1v1h-1zM4 -3h1v1h-1zM4 -2h1v1h-1zM0 -1h4v1h-4z"/><path id="g55" d="M0 -9h11v1h-11zM8 -8h1v1h-1zM2 -7h4v1h-4zM8 -7h1v1h-1zM2 -6h1v1h-1zM5 -6h1v1h-1zM8 -6h1v1h-1zM2 -5h1v1h-1zM5 -5h1v1h-1zM8 -5h1v1h-1zM2 -4h4v1h-4zM8 -4h1v1h-1zM2 -3h1v1h-1zM5 -3h1v1h-1zM8 -3h1v1h-1zM8 -2h1v1h-1zM8 -1h1v1h-1zM6 0h3v1h-3z"/><path id="g56" d="M1 -10h9v1h-9zM1 -9h1v1h-1zM5 -9h1v1h-1zM9 -9h1v1h-1zM1 -8h1v1h-1zM5 -8h1v1h-1zM9 -8h1v1h-1zM1 -7h9v1h-9zM1 -6h1v1h-1zM5 -6h1v1h-1zM9 -6h1v1h-1zM1 -5h1v1h-1zM5 -5h1v1h-1zM9 -5h1v1h-1zM1 -4h9v1h-9zM1 -3h1v1h-1zM5 -3h1v1h-1zM9 -3h1v1h-1zM1 -2h1v1h-1zM5 -2h1v1h-1zM9 -2h1v1h-1zM0 -1h1v1h-1zM5 -1h1v1h-1zM9 -1h1v1h-1zM0 0h1v1h-1zM5 0h1v1h-1zM8 0h2v1h-2z"/><path id="g57" d="M1 -10h9v1h-9zM5 -9h1v1h-1zM2 -8h1v1h-1zM5 -8h1v1h-1zM8 -8h1v1h-1zM3 -7h1v1h-1zM5 -7h1v1h-1zM7 -7h1v1h-1zM5 -6h1v1h-1zM0 -5h11v1h-11zM5 -4h1v1h-1zM5 -3h1v1h-1zM5 -2h1v1h-1zM5 -1h1v1h-1zM5 0h1v1h-1z"/><path id="g58" d="M5 -10h1v1h-1zM5 -9h2v1h-2zM4 -8h1v1h-1zM7 -8h1v1h-1zM3 -7h1v1h-1zM8 -7h1v1h-1zM2 -6h6v1h-6zM9 -6h1v1h-1zM0 -5h2v1h-2zM3 -5h1v1h-1zM7 -5h1v1h-1zM10 -5h1v1h-1zM3 -4h1v1h-1zM5 -4h1v1h-1zM7 -4h1v1h-1zM3 -3h1v1h-1zM6 -3h1v1h-1zM3 -2h1v1h-1zM9 -2h1v1h-1zM3 -1h1v1h-1zM9 -1h1v1h-1zM4 0h6v1h-6z"/><path id="g59" d="M1 -10h8v1h-8zM3 -9h1v1h-1zM8 -9h1v1h-1zM3 -8h1v1h-1zM5 -8h6v1h-6zM3 -7h2v1h-2zM7 -7h1v1h-1zM10 -7h1v1h-1zM2 -6h1v1h-1zM5 -6h2v1h-2zM10 -6h1v1h-1zM1 -5h1v1h-1zM4 -5h1v1h-1zM7 -5h1v1h-1zM9 -5h1v1h-1zM0 -4h1v1h-1zM2 -4h8v1h-8zM2 -3h1v1h-1zM4 -3h1v1h-1zM7 -3h1v1h-1zM9 -3h1v1h-1zM2 -2h1v1h-1zM4 -2h1v1h-1zM7 -2h1v1h-1zM9 -2h1v1h-1zM2 -1h1v1h-1zM4 -1h1v1h-1zM7 -1h1v1h-1zM9 -1h1v1h-1zM0 0h11v1h-11z"/><path id="g60" d="M2 -10h7v1h-7zM0 -7h11v1h-11zM4 -6h1v1h-1zM3 -5h1v1h-1zM2 -4h8v1h-8zM9 -3h1v1h-1zM9 -2h1v1h-1zM5 -1h1v1h-1zM8 -1h1v1h-1zM6 0h2v1h-2z"/><path id="g61" d="M7 -10h3v1h-3zM1 -9h6v1h-6zM1 -8h1v1h-1zM6 -8h1v1h-1zM1 -7h10v1h-10zM1 -6h1v1h-1zM6 -6h1v1h-1zM1 -5h1v1h-1zM3 -5h7v1h-7zM1 -4h1v1h-1zM3 -4h1v1h-1zM9 -4h1v1h-1zM1 -3h1v1h-1zM3 -3h1v1h-1zM6 -3h1v1h-1zM9 -3h1v1h-1zM1 -2h1v1h-1zM3 -2h1v1h-1zM6 -2h1v1h-1zM9 -2h1v1h-1zM0 -1h1v1h-1zM5 -1h1v1h-1zM7 -1h1v1h-1zM0 0h1v1h-1zM2 0h3v1h-3zM8 0h3v1h-3z"/><path id="g62" d="M2 -10h1v1h-1zM5 -10h6v1h-6zM2 -9h1v1h-1zM5 -9h1v1h-1zM8 -9h1v1h-1zM10 -9h1v1h-1zM0 -8h6v1h-6zM8 -8h1v1h-1zM10 -8h1v1h-1zM2 -7h1v1h-1zM5 -7h6v1h-6zM2 -6h1v1h-1zM4 -6h2v1h-2zM8 -6h1v1h-1zM10 -6h1v1h-1zM2 -5h2v1h-2zM5 -5h1v1h-1zM8 -5h1v1h-1zM10 -5h1v1h-1zM1 -4h2v1h-2zM5 -4h6v1h-6zM0 -3h1v1h-1zM2 -3h1v1h-1zM5 -3h1v1h-1zM8 -3h1v1h-1zM10 -3h1v1h-1zM2 -2h1v1h-1zM8 -2h1v1h-1zM2 -1h1v1h-1zM8 -1h1v1h-1zM0 0h3v1h-3zM8 0h1v1h-1z"/><path id="g63" d="M1 -10h8v1h-8zM1 -9h1v1h-1zM8 -9h1v1h-1zM1 -8h1v1h-1zM6 -8h1v1h-1zM8 -8h1v1h-1zM1 -7h1v1h-1zM3 -7h1v1h-1zM6 -7h1v1h-1zM8 -7h1v1h-1zM1 -6h1v1h-1zM4 -6h2v1h-2zM8 -6h1v1h-1zM1 -5h1v1h-1zM5 -5h1v1h-1zM8 -5h1v1h-1zM1 -4h1v1h-1zM4 -4h2v1h-2zM8 -4h1v1h-1zM1 -3h1v1h-1zM3 -3h1v1h-1zM6 -3h1v1h-1zM8 -3h1v1h-1zM1 -2h2v1h-2zM6 -2h1v1h-1zM8 -2h1v1h-1zM10 -2h1v1h-1zM0 -1h1v1h-1zM9 -1h2v1h-2zM0 0h1v1h-1zM10 0h1v1h-1z"/><path id="g64" d="M0 -10h4v1h-4zM7 -10h1v1h-1zM0 -9h1v1h-1zM3 -9h1v1h-1zM6 -9h1v1h-1zM8 -9h1v1h-1zM0 -8h1v1h-1zM2 -8h1v1h-1zM5 -8h1v1h-1zM9 -8h1v1h-1zM0 -7h2v1h-2zM4 -7h1v1h-1zM10 -7h1v1h-1zM0 -6h1v1h-1zM2 -6h1v1h-1zM5 -6h5v1h-5zM0 -5h1v1h-1zM3 -5h1v1h-1zM0 -4h1v1h-1zM3 -4h2v1h-2zM6 -4h1v1h-1zM9 -4h1v1h-1zM0 -3h2v1h-2zM3 -3h1v1h-1zM5 -3h1v1h-1zM7 -3h1v1h-1zM9 -3h1v1h-1zM0 -2h1v1h-1zM2 -2h1v1h-1zM5 -2h1v1h-1zM7 -2h1v1h-1zM9 -2h1v1h-1zM0 -1h1v1h-1zM8 -1h1v1h-1zM0 0h1v1h-1zM4 0h7v1h-7z"/><path id="g65" d="M5 -10h1v1h-1zM1 -9h10v1h-10zM1 -8h1v1h-1zM4 -8h1v1h-1zM7 -8h1v1h-1zM1 -7h9v1h-9zM1 -6h1v1h-1zM4 -6h1v1h-1zM7 -6h1v1h-1zM1 -5h1v1h-1zM4 -5h4v1h-4zM1 -4h1v1h-1zM1 -3h1v1h-1zM3 -3h6v1h-6zM1 -2h1v1h-1zM4 -2h1v1h-1zM7 -2h1v1h-1zM0 -1h1v1h-1zM5 -1h2v1h-2zM0 0h1v1h-1zM2 0h3v1h-3zM7 0h3v1h-3z"/><path id="g66" d="M1 -8h1v1h-1zM4 -8h1v1h-1zM0 -7h1v1h-1zM2 -7h1v1h-1zM4 -7h1v1h-1zM0 -6h1v1h-1zM2 -6h2v1h-2zM1 -5h1v1h-1zM3 -5h1v1h-1zM2 -4h1v1h-1zM2 -3h1v1h-1zM4 -3h1v1h-1zM1 -2h1v1h-1zM3 -2h1v1h-1zM5 -2h1v1h-1zM1 -1h1v1h-1zM3 -1h1v1h-1zM5 -1h1v1h-1zM0 0h1v1h-1zM4 0h1v1h-1z"/><path id="g67" d="M2 -10h1v1h-1zM7 -10h1v1h-1zM2 -9h1v1h-1zM5 -9h5v1h-5zM0 -8h5v1h-5zM7 -8h1v1h-1zM2 -7h1v1h-1zM7 -7h1v1h-1zM2 -6h1v1h-1zM4 -6h7v1h-7zM2 -5h2v1h-2zM8 -5h1v1h-1zM1 -4h2v1h-2zM4 -4h7v1h-7zM0 -3h1v1h-1zM2 -3h1v1h-1zM5 -3h1v1h-1zM8 -3h1v1h-1zM2 -2h1v1h-1zM6 -2h1v1h-1zM8 -2h1v1h-1zM2 -1h1v1h-1zM8 -1h1v1h-1zM0 0h3v1h-3zM7 0h2v1h-2z"/><path id="g68" d="M2 -10h1v1h-1zM2 -9h1v1h-1zM4 -9h6v1h-6zM0 -8h4v1h-4zM5 -8h1v1h-1zM9 -8h1v1h-1zM2 -7h1v1h-1zM5 -7h1v1h-1zM9 -7h1v1h-1zM2 -6h1v1h-1zM5 -6h1v1h-1zM9 -6h1v1h-1zM1 -5h3v1h-3zM6 -5h1v1h-1zM8 -5h1v1h-1zM1 -4h2v1h-2zM4 -4h1v1h-1zM6 -4h1v1h-1zM8 -4h1v1h-1zM0 -3h1v1h-1zM2 -3h1v1h-1zM7 -3h1v1h-1zM2 -2h1v1h-1zM6 -2h1v1h-1zM8 -2h1v1h-1zM2 -1h1v1h-1zM5 -1h1v1h-1zM9 -1h1v1h-1zM2 0h1v1h-1zM4 0h1v1h-1zM10 0h1v1h-1z"/><path id="g69" d="M2 -10h1v1h-1zM8 -10h1v1h-1zM3 -9h1v1h-1zM7 -9h1v1h-1zM0 -8h11v1h-11zM3 -7h1v1h-1zM7 -7h1v1h-1zM2 -6h1v1h-1zM8 -6h1v1h-1zM1 -5h1v1h-1zM9 -5h1v1h-1zM0 -4h1v1h-1zM2 -4h7v1h-7zM10 -4h1v1h-1zM2 -3h1v1h-1zM4 -3h1v1h-1zM6 -3h1v1h-1zM8 -3h1v1h-1zM2 -2h1v1h-1zM4 -2h1v1h-1zM6 -2h1v1h-1zM8 -2h1v1h-1zM2 -1h1v1h-1zM4 -1h1v1h-1zM6 -1h1v1h-1zM8 -1h1v1h-1zM0 0h11v1h-11z"/><path id="g70" d="M5 -10h1v1h-1zM6 -9h1v1h-1zM1 -8h10v1h-10zM1 -7h1v1h-1zM1 -6h1v1h-1zM5 -6h1v1h-1zM9 -6h1v1h-1zM1 -5h1v1h-1zM3 -5h1v1h-1zM6 -5h1v1h-1zM9 -5h1v1h-1zM1 -4h1v1h-1zM4 -4h1v1h-1zM6 -4h1v1h-1zM9 -4h1v1h-1zM1 -3h1v1h-1zM4 -3h1v1h-1zM8 -3h1v1h-1zM1 -2h1v1h-1zM8 -2h1v1h-1zM0 -1h1v1h-1zM7 -1h1v1h-1zM0 0h1v1h-1zM3 0h8v1h-8z"/><path id="g71" d="M1 -10h1v1h-1zM6 -10h1v1h-1zM2 -9h1v1h-1zM5 -9h5v1h-5zM2 -8h1v1h-1zM5 -8h1v1h-1zM9 -8h1v1h-1zM5 -7h5v1h-5zM0 -6h3v1h-3zM5 -6h1v1h-1zM2 -5h1v1h-1zM5 -5h6v1h-6zM2 -4h1v1h-1zM5 -4h1v1h-1zM10 -4h1v1h-1zM2 -3h1v1h-1zM5 -3h1v1h-1zM10 -3h1v1h-1zM2 -2h1v1h-1zM5 -2h6v1h-6zM1 -1h1v1h-1zM3 -1h1v1h-1zM0 0h1v1h-1zM4 0h7v1h-7z"/><path id="g72" d="M2 -10h1v1h-1zM2 -9h1v1h-1zM0 -8h6v1h-6zM7 -8h4v1h-4zM2 -7h1v1h-1zM5 -7h1v1h-1zM7 -7h1v1h-1zM10 -7h1v1h-1zM2 -6h1v1h-1zM5 -6h1v1h-1zM7 -6h1v1h-1zM10 -6h1v1h-1zM2 -5h1v1h-1zM5 -5h1v1h-1zM7 -5h1v1h-1zM10 -5h1v1h-1zM2 -4h1v1h-1zM5 -4h1v1h-1zM7 -4h1v1h-1zM10 -4h1v1h-1zM2 -3h1v1h-1zM5 -3h1v1h-1zM7 -3h1v1h-1zM10 -3h1v1h-1zM1 -2h1v1h-1zM5 -2h1v1h-1zM7 -2h1v1h-1zM10 -2h1v1h-1zM1 -1h1v1h-1zM3 -1h1v1h-1zM5 -1h1v1h-1zM7 -1h4v1h-4zM0 0h1v1h-1zM4 0h1v1h-1zM7 0h1v1h-1zM10 0h1v1h-1z"/><path id="g73" d="M4 -10h1v1h-1zM4 -9h1v1h-1zM4 -8h6v1h-6zM4 -7h1v1h-1zM4 -6h1v1h-1zM1 -5h8v1h-8zM1 -4h1v1h-1zM8 -4h1v1h-1zM1 -3h1v1h-1zM8 -3h1v1h-1zM1 -2h1v1h-1zM8 -2h1v1h-1zM1 -1h8v1h-8zM1 0h1v1h-1zM8 0h1v1h-1z"/><path id="g74" d="M3 -10h1v1h-1zM7 -10h1v1h-1zM1 -9h9v1h-9zM3 -8h1v1h-1zM7 -8h1v1h-1zM3 -7h3v1h-3zM7 -7h1v1h-1zM3 -6h1v1h-1zM5 -6h3v1h-3zM3 -5h1v1h-1zM7 -5h1v1h-1zM0 -4h11v1h-11zM2 -3h1v1h-1zM5 -3h1v1h-1zM8 -3h1v1h-1zM0 -2h2v1h-2zM3 -2h5v1h-5zM9 -2h2v1h-2zM5 -1h1v1h-1zM0 0h11v1h-11z"/><path id="g75" d="M8 -10h1v1h-1zM0 -9h5v1h-5zM6 -9h1v1h-1zM8 -9h1v1h-1zM10 -9h1v1h-1zM2 -8h1v1h-1zM6 -8h1v1h-1zM8 -8h1v1h-1zM10 -8h1v1h-1zM2 -7h1v1h-1zM6 -7h1v1h-1zM8 -7h1v1h-1zM10 -7h1v1h-1zM1 -6h4v1h-4zM6 -6h5v1h-5zM0 -5h2v1h-2zM4 -5h1v1h-1zM8 -5h1v1h-1zM1 -4h1v1h-1zM4 -4h1v1h-1zM6 -4h1v1h-1zM8 -4h1v1h-1zM10 -4h1v1h-1zM1 -3h1v1h-1zM4 -3h1v1h-1zM6 -3h1v1h-1zM8 -3h1v1h-1zM10 -3h1v1h-1zM1 -2h4v1h-4zM6 -2h1v1h-1zM8 -2h1v1h-1zM10 -2h1v1h-1zM1 -1h1v1h-1zM4 -1h1v1h-1zM6 -1h5v1h-5zM6 0h1v1h-1zM10 0h1v1h-1z"/><path id="g76" d="M5 -10h1v1h-1zM1 -9h10v1h-10zM4 -8h1v1h-1zM7 -8h1v1h-1zM2 -7h1v1h-1zM4 -7h1v1h-1zM7 -7h1v1h-1zM9 -7h1v1h-1zM1 -6h1v1h-1zM4 -6h1v1h-1zM7 -6h1v1h-1zM10 -6h1v1h-1zM2 -4h8v1h-8zM4 -3h1v1h-1zM7 -3h1v1h-1zM5 -2h2v1h-2zM4 -1h1v1h-1zM7 -1h1v1h-1zM1 0h3v1h-3zM8 0h3v1h-3z"/><path id="g77" d="M3 -10h1v1h-1zM6 -10h1v1h-1zM3 -9h1v1h-1zM6 -9h1v1h-1zM2 -8h1v1h-1zM6 -8h1v1h-1zM9 -8h1v1h-1zM2 -7h1v1h-1zM6 -7h1v1h-1zM8 -7h1v1h-1zM1 -6h2v1h-2zM6 -6h2v1h-2zM0 -5h1v1h-1zM2 -5h1v1h-1zM6 -5h1v1h-1zM2 -4h1v1h-1zM5 -4h2v1h-2zM2 -3h1v1h-1zM4 -3h1v1h-1zM6 -3h1v1h-1zM2 -2h1v1h-1zM6 -2h1v1h-1zM10 -2h1v1h-1zM2 -1h1v1h-1zM6 -1h1v1h-1zM10 -1h1v1h-1zM2 0h1v1h-1zM7 0h4v1h-4z"/><path id="g78" d="M2 -10h1v1h-1zM6 -10h5v1h-5zM0 -9h6v1h-6zM8 -9h1v1h-1zM0 -8h1v1h-1zM5 -8h6v1h-6zM1 -7h4v1h-4zM6 -7h1v1h-1zM10 -7h1v1h-1zM0 -6h2v1h-2zM4 -6h1v1h-1zM6 -6h1v1h-1zM8 -6h1v1h-1zM10 -6h1v1h-1zM2 -5h2v1h-2zM6 -5h1v1h-1zM8 -5h1v1h-1zM10 -5h1v1h-1zM1 -4h1v1h-1zM4 -4h1v1h-1zM6 -4h1v1h-1zM8 -4h1v1h-1zM10 -4h1v1h-1zM0 -3h7v1h-7zM8 -3h1v1h-1zM10 -3h1v1h-1zM1 -2h1v1h-1zM4 -2h1v1h-1zM6 -2h1v1h-1zM8 -2h1v1h-1zM10 -2h1v1h-1zM1 -1h4v1h-4zM7 -1h1v1h-1zM9 -1h1v1h-1zM1 0h1v1h-1zM4 0h3v1h-3zM10 0h1v1h-1z"/><path id="g79" d="M6 -10h5v1h-5zM0 -9h4v1h-4zM6 -9h1v1h-1zM10 -9h1v1h-1zM0 -8h1v1h-1zM3 -8h1v1h-1zM6 -8h1v1h-1zM10 -8h1v1h-1zM0 -7h1v1h-1zM3 -7h1v1h-1zM6 -7h5v1h-5zM0 -6h4v1h-4zM6 -6h1v1h-1zM10 -6h1v1h-1zM0 -5h1v1h-1zM3 -5h1v1h-1zM6 -5h1v1h-1zM10 -5h1v1h-1zM0 -4h1v1h-1zM3 -4h1v1h-1zM6 -4h5v1h-5zM0 -3h4v1h-4zM6 -3h1v1h-1zM10 -3h1v1h-1zM5 -2h1v1h-1zM10 -2h1v1h-1zM4 -1h1v1h-1zM8 -1h1v1h-1zM10 -1h1v1h-1zM2 0h2v1h-2zM9 0h1v1h-1z"/><path id="g80" d="M2 -10h1v1h-1zM2 -9h1v1h-1zM5 -9h6v1h-6zM1 -8h1v1h-1zM5 -8h1v1h-1zM8 -8h1v1h-1zM10 -8h1v1h-1zM1 -7h1v1h-1zM3 -7h1v1h-1zM5 -7h1v1h-1zM8 -7h1v1h-1zM10 -7h1v1h-1zM0 -6h3v1h-3zM5 -6h1v1h-1zM8 -6h1v1h-1zM10 -6h1v1h-1zM2 -5h1v1h-1zM5 -5h6v1h-6zM1 -4h1v1h-1zM5 -4h1v1h-1zM8 -4h1v1h-1zM10 -4h1v1h-1zM0 -3h4v1h-4zM5 -3h1v1h-1zM8 -3h1v1h-1zM10 -3h1v1h-1zM5 -2h1v1h-1zM8 -2h1v1h-1zM10 -2h1v1h-1zM2 -1h2v1h-2zM5 -1h6v1h-6zM0 0h2v1h-2zM5 0h1v1h-1zM10 0h1v1h-1z"/><path id="g81" d="M3 -10h1v12h-1z"/><path id="g82" d="M3 -10h2v1h-2zM9 -10h2v1h-2zM1 -9h2v1h-2zM6 -9h3v1h-3zM1 -8h1v1h-1zM6 -8h1v1h-1zM1 -7h4v1h-4zM6 -7h1v1h-1zM1 -6h1v1h-1zM4 -6h1v1h-1zM6 -6h5v1h-5zM1 -5h1v1h-1zM4 -5h1v1h-1zM6 -5h1v1h-1zM9 -5h1v1h-1zM1 -4h4v1h-4zM6 -4h1v1h-1zM9 -4h1v1h-1zM1 -3h1v1h-1zM6 -3h1v1h-1zM9 -3h1v1h-1zM1 -2h1v1h-1zM6 -2h1v1h-1zM9 -2h1v1h-1zM1 -1h1v1h-1zM5 -1h1v1h-1zM9 -1h1v1h-1zM0 0h1v1h-1zM4 0h1v1h-1zM9 0h1v1h-1z"/><path id="g83" d="M3 -10h6v1h-6zM3 -9h1v1h-1zM8 -9h1v1h-1zM3 -8h1v1h-1zM8 -8h1v1h-1zM3 -7h6v1h-6zM1 -5h4v1h-4zM7 -5h4v1h-4zM1 -4h1v1h-1zM4 -4h1v1h-1zM7 -4h1v1h-1zM10 -4h1v1h-1zM1 -3h1v1h-1zM4 -3h1v1h-1zM7 -3h1v1h-1zM10 -3h1v1h-1zM1 -2h1v1h-1zM4 -2h1v1h-1zM7 -2h1v1h-1zM10 -2h1v1h-1zM1 -1h4v1h-4zM7 -1h4v1h-4zM1 0h1v1h-1zM4 0h1v1h-1zM7 0h1v1h-1zM10 0h1v1h-1z"/><path id="g84" d="M1 -10h9v1h-9zM3 -9h1v1h-1zM7 -9h1v1h-1zM3 -8h1v1h-1zM7 -8h1v1h-1zM3 -7h1v1h-1zM7 -7h1v1h-1zM3 -6h1v1h-1zM7 -6h1v1h-1zM0 -5h11v1h-11zM3 -4h1v1h-1zM7 -4h1v1h-1zM2 -3h1v1h-1zM7 -3h1v1h-1zM2 -2h1v1h-1zM7 -2h1v1h-1zM1 -1h1v1h-1zM7 -1h1v1h-1zM0 0h1v1h-1zM7 0h1v1h-1z"/><path id="g85" d="M2 -10h1v1h-1zM6 -10h4v1h-4zM2 -9h1v1h-1zM6 -9h1v1h-1zM9 -9h1v1h-1zM0 -8h5v1h-5zM6 -8h1v1h-1zM9 -8h1v1h-1zM2 -7h1v1h-1zM5 -7h1v1h-1zM9 -7h2v1h-2zM2 -6h1v1h-1zM4 -6h1v1h-1zM2 -5h2v1h-2zM5 -5h5v1h-5zM1 -4h2v1h-2zM5 -4h1v1h-1zM9 -4h1v1h-1zM0 -3h1v1h-1zM2 -3h1v1h-1zM6 -3h1v1h-1zM8 -3h1v1h-1zM2 -2h1v1h-1zM7 -2h1v1h-1zM2 -1h1v1h-1zM6 -1h1v1h-1zM8 -1h1v1h-1zM0 0h3v1h-3zM4 0h2v1h-2zM9 0h2v1h-2z"/><path id="g86" d="M3 -11h1v1h-1zM3 -10h1v1h-1zM3 -9h1v1h-1zM2 -8h1v1h-1zM2 -7h1v1h-1zM2 -6h1v1h-1zM1 -5h1v1h-1zM1 -4h1v1h-1zM1 -3h1v1h-1zM0 -2h1v1h-1zM0 -1h1v1h-1zM0 0h1v1h-1z"/><path id="g87" d="M0 -10h11v1h-11zM9 -9h1v1h-1zM2 -8h1v1h-1zM5 -8h1v1h-1zM8 -8h1v1h-1zM3 -7h1v1h-1zM5 -7h1v1h-1zM1 -6h1v1h-1zM5 -6h1v1h-1zM2 -5h1v1h-1zM5 -5h1v1h-1zM0 -4h11v1h-11zM5 -3h1v1h-1zM4 -2h1v1h-1zM6 -2h1v1h-1zM2 -1h2v1h-2zM7 -1h2v1h-2zM0 0h2v1h-2zM9 0h2v1h-2z"/><path id="g88" d="M5 -10h1v1h-1zM1 -9h9v1h-9zM5 -8h1v1h-1zM0 -7h11v1h-11zM3 -6h1v1h-1zM9 -6h1v1h-1zM2 -5h1v1h-1zM4 -5h1v1h-1zM6 -5h1v1h-1zM8 -5h1v1h-1zM3 -4h1v1h-1zM6 -4h1v1h-1zM0 -3h11v1h-11zM6 -2h1v1h-1zM4 -1h2v1h-2zM7 -1h2v1h-2zM1 0h3v1h-3zM9 0h1v1h-1z"/><path id="g89" d="M2 -10h7v1h-7zM2 -9h1v1h-1zM8 -9h1v1h-1zM2 -8h7v1h-7zM2 -7h1v1h-1zM8 -7h1v1h-1zM0 -6h11v1h-11zM2 -5h1v1h-1zM5 -5h1v1h-1zM8 -5h1v1h-1zM2 -4h7v1h-7zM2 -3h1v1h-1zM5 -3h1v1h-1zM8 -3h1v1h-1zM1 -2h9v1h-9zM5 -1h1v1h-1zM0 0h11v1h-11z"/><path id="g90" d="M3 -10h1v1h-1zM6 -10h1v1h-1zM3 -9h1v1h-1zM6 -9h2v1h-2zM2 -8h1v1h-1zM5 -8h1v1h-1zM8 -8h1v1h-1zM2 -7h3v1h-3zM9 -7h2v1h-2zM1 -6h2v1h-2zM5 -6h1v1h-1zM8 -6h1v1h-1zM0 -5h1v1h-1zM2 -5h1v1h-1zM5 -5h1v1h-1zM8 -5h1v1h-1zM2 -4h1v1h-1zM5 -4h1v1h-1zM8 -4h1v1h-1zM2 -3h1v1h-1zM5 -3h1v1h-1zM8 -3h1v1h-1zM2 -2h1v1h-1zM5 -2h1v1h-1zM8 -2h1v1h-1zM2 -1h1v1h-1zM4 -1h1v1h-1zM8 -1h1v1h-1zM2 0h2v1h-2zM8 0h1v1h-1z"/><path id="g91" d="M6 -10h1v1h-1zM0 -9h4v1h-4zM6 -9h1v1h-1zM0 -8h1v1h-1zM3 -8h1v1h-1zM6 -8h5v1h-5zM0 -7h1v1h-1zM3 -7h1v1h-1zM5 -7h2v1h-2zM0 -6h5v1h-5zM6 -6h1v1h-1zM0 -5h1v1h-1zM3 -5h1v1h-1zM6 -5h4v1h-4zM0 -4h1v1h-1zM3 -4h1v1h-1zM6 -4h1v1h-1zM0 -3h4v1h-4zM6 -3h1v1h-1zM0 -2h1v1h-1zM3 -2h1v1h-1zM6 -2h4v1h-4zM6 -1h1v1h-1zM6 0h1v1h-1z"/><path id="g92" d="M1 -10h1v1h-1zM8 -10h2v1h-2zM2 -9h1v1h-1zM4 -9h4v1h-4zM10 -9h1v1h-1zM0 -8h1v1h-1zM4 -8h1v1h-1zM6 -8h1v1h-1zM10 -8h1v1h-1zM1 -7h1v1h-1zM3 -7h1v1h-1zM5 -7h1v1h-1zM7 -7h1v1h-1zM9 -7h1v1h-1zM3 -6h1v1h-1zM5 -6h6v1h-6zM2 -5h1v1h-1zM8 -5h1v1h-1zM2 -4h1v1h-1zM7 -4h1v1h-1zM0 -3h2v1h-2zM3 -3h8v1h-8zM1 -2h1v1h-1zM7 -2h1v1h-1zM1 -1h1v1h-1zM5 -1h1v1h-1zM7 -1h1v1h-1zM1 0h1v1h-1zM6 0h1v1h-1z"/><path id="g93" d="M7 -10h1v1h-1zM1 -9h4v1h-4zM7 -9h1v1h-1zM7 -8h1v1h-1zM6 -7h5v1h-5zM0 -6h6v1h-6zM7 -6h1v1h-1zM10 -6h1v1h-1zM2 -5h1v1h-1zM7 -5h1v1h-1zM10 -5h1v1h-1zM2 -4h1v1h-1zM7 -4h1v1h-1zM10 -4h1v1h-1zM1 -3h1v1h-1zM4 -3h1v1h-1zM7 -3h1v1h-1zM10 -3h1v1h-1zM0 -2h5v1h-5zM6 -2h1v1h-1zM10 -2h1v1h-1zM4 -1h1v1h-1zM6 -1h1v1h-1zM10 -1h1v1h-1zM5 0h1v1h-1zM8 0h2v1h-2z"/><path id="g94" d="M5 -10h1v1h-1zM5 -9h1v1h-1zM5 -8h1v1h-1zM5 -7h1v1h-1zM5 -6h5v1h-5zM5 -5h1v1h-1zM5 -4h1v1h-1zM5 -3h1v1h-1zM5 -2h1v1h-1zM5 -1h1v1h-1zM0 0h11v1h-11z"/><path id="g95" d="M1 -10h1v1h-1zM7 -10h1v1h-1zM2 -9h1v1h-1zM8 -9h1v1h-1zM0 -8h1v1h-1zM5 -8h6v1h-6zM1 -7h1v1h-1zM3 -7h1v1h-1zM5 -7h1v1h-1zM10 -7h1v1h-1zM3 -6h1v1h-1zM5 -6h1v1h-1zM10 -6h1v1h-1zM2 -5h1v1h-1zM5 -5h6v1h-6zM2 -4h1v1h-1zM5 -4h1v1h-1zM0 -3h2v1h-2zM5 -3h1v1h-1zM1 -2h1v1h-1zM5 -2h1v1h-1zM1 -1h1v1h-1zM4 -1h1v1h-1zM1 0h1v1h-1zM3 0h1v1h-1z"/><path id="g96" d="M1 -10h1v1h-1zM4 -10h7v1h-7zM2 -9h1v1h-1zM4 -9h1v1h-1zM10 -9h1v1h-1zM5 -8h1v1h-1zM8 -8h1v1h-1zM0 -7h1v1h-1zM4 -7h1v1h-1zM7 -7h1v1h-1zM9 -7h1v1h-1zM1 -6h1v1h-1zM7 -6h1v1h-1zM2 -5h1v1h-1zM4 -5h7v1h-7zM2 -4h1v1h-1zM7 -4h1v1h-1zM0 -3h2v1h-2zM6 -3h3v1h-3zM1 -2h1v1h-1zM5 -2h1v1h-1zM7 -2h1v1h-1zM9 -2h1v1h-1zM1 -1h1v1h-1zM3 -1h2v1h-2zM7 -1h1v1h-1zM10 -1h1v1h-1zM1 0h1v1h-1zM7 0h1v1h-1z"/><path id="g97" d="M2 -10h1v1h-1zM6 -10h1v1h-1zM2 -9h1v1h-1zM6 -9h1v1h-1zM9 -9h2v1h-2zM0 -8h5v1h-5zM6 -8h3v1h-3zM2 -7h1v1h-1zM6 -7h1v1h-1zM10 -7h1v1h-1zM2 -6h1v1h-1zM4 -6h1v1h-1zM6 -6h5v1h-5zM2 -5h2v1h-2zM1 -4h2v1h-2zM6 -4h5v1h-5zM0 -3h1v1h-1zM2 -3h1v1h-1zM6 -3h1v1h-1zM10 -3h1v1h-1zM2 -2h1v1h-1zM6 -2h5v1h-5zM2 -1h1v1h-1zM6 -1h1v1h-1zM10 -1h1v1h-1zM0 0h3v1h-3zM6 0h5v1h-5z"/><path id="g98" d="M0 -10h1v1h-1zM3 -10h1v1h-1zM5 -10h1v1h-1zM7 -10h1v1h-1zM1 -9h1v1h-1zM3 -9h2v1h-2zM7 -9h1v1h-1zM0 -8h6v1h-6zM7 -8h4v1h-4zM2 -7h2v1h-2zM6 -7h2v1h-2zM9 -7h1v1h-1zM1 -6h1v1h-1zM3 -6h2v1h-2zM7 -6h1v1h-1zM9 -6h1v1h-1zM0 -5h1v1h-1zM3 -5h1v1h-1zM5 -5h1v1h-1zM7 -5h1v1h-1zM9 -5h1v1h-1zM0 -4h6v1h-6zM7 -4h1v1h-1zM9 -4h1v1h-1zM2 -3h1v1h-1zM4 -3h1v1h-1zM7 -3h1v1h-1zM9 -3h1v1h-1zM1 -2h2v1h-2zM4 -2h1v1h-1zM8 -2h1v1h-1zM3 -1h1v1h-1zM7 -1h1v1h-1zM9 -1h1v1h-1zM0 0h3v1h-3zM4 0h3v1h-3zM10 0h1v1h-1z"/><path id="g99" d="M1 -10h1v1h-1zM4 -10h7v1h-7zM1 -9h1v1h-1zM4 -9h1v1h-1zM10 -9h1v1h-1zM1 -8h4v1h-4zM10 -8h1v1h-1zM0 -7h1v1h-1zM4 -7h1v1h-1zM6 -7h3v1h-3zM10 -7h1v1h-1zM0 -6h5v1h-5zM10 -6h1v1h-1zM1 -5h1v1h-1zM4 -5h1v1h-1zM6 -5h3v1h-3zM10 -5h1v1h-1zM0 -4h5v1h-5zM6 -4h1v1h-1zM8 -4h1v1h-1zM10 -4h1v1h-1zM1 -3h1v1h-1zM4 -3h1v1h-1zM6 -3h3v1h-3zM10 -3h1v1h-1zM1 -2h1v1h-1zM3 -2h2v1h-2zM10 -2h1v1h-1zM1 -1h2v1h-2zM4 -1h1v1h-1zM10 -1h1v1h-1zM1 0h1v1h-1zM4 0h1v1h-1zM8 0h3v1h-3z"/><path id="g100" d="M3 -10h1v1h-1zM7 -10h1v1h-1zM3 -9h1v1h-1zM7 -9h1v1h-1zM1 -8h9v1h-9zM3 -7h1v1h-1zM7 -7h1v1h-1zM3 -6h1v1h-1zM7 -6h1v1h-1zM3 -5h1v1h-1zM7 -5h1v1h-1zM0 -4h11v1h-11zM3 -2h1v1h-1zM7 -2h1v1h-1zM2 -1h1v1h-1zM8 -1h1v1h-1zM1 0h1v1h-1zM9 0h1v1h-1z"/><path id="g101" d="M3 -10h1v1h-1zM3 -9h6v1h-6zM2 -8h1v1h-1zM4 -8h1v1h-1zM7 -8h1v1h-1zM1 -7h1v1h-1zM5 -7h2v1h-2zM4 -6h1v1h-1zM6 -6h1v1h-1zM2 -5h2v1h-2zM5 -5h1v1h-1zM7 -5h2v1h-2zM0 -4h2v1h-2zM5 -4h1v1h-1zM9 -4h2v1h-2zM2 -3h7v1h-7zM3 -2h1v1h-1zM5 -2h1v1h-1zM7 -2h1v1h-1zM2 -1h1v1h-1zM5 -1h1v1h-1zM8 -1h1v1h-1zM0 0h2v1h-2zM3 0h3v1h-3zM9 0h1v1h-1z"/><path id="g102" d="M1 -10h1v1h-1zM2 -9h1v1h-1zM5 -9h6v1h-6zM0 -8h1v1h-1zM5 -8h1v1h-1zM1 -7h1v1h-1zM3 -7h1v1h-1zM5 -7h1v1h-1zM3 -6h1v1h-1zM5 -6h1v1h-1zM2 -5h1v1h-1zM5 -5h1v1h-1zM2 -4h1v1h-1zM5 -4h1v1h-1zM0 -3h2v1h-2zM5 -3h1v1h-1zM1 -2h1v1h-1zM5 -2h1v1h-1zM1 -1h1v1h-1zM5 -1h1v1h-1zM1 0h1v1h-1zM5 0h6v1h-6z"/><path id="g103" d="M3 -10h1v1h-1zM7 -10h1v1h-1zM4 -9h1v1h-1zM6 -9h1v1h-1zM2 -8h7v1h-7zM2 -7h1v1h-1zM8 -7h1v1h-1zM2 -6h1v1h-1zM8 -6h1v1h-1zM2 -5h7v1h-7zM2 -4h1v1h-1zM8 -4h1v1h-1zM5 -3h1v1h-1zM9 -3h1v1h-1zM1 -2h1v1h-1zM3 -2h1v1h-1zM6 -2h1v1h-1zM8 -2h1v1h-1zM10 -2h1v1h-1zM1 -1h1v1h-1zM3 -1h1v1h-1zM8 -1h1v1h-1zM10 -1h1v1h-1zM0 0h1v1h-1zM4 0h5v1h-5z"/><path id="g104" d="M2 -10h1v1h-1zM6 -10h1v1h-1zM2 -9h1v1h-1zM6 -9h1v1h-1zM2 -8h1v1h-1zM5 -8h6v1h-6zM0 -7h4v1h-4zM10 -7h1v1h-1zM2 -6h1v1h-1zM5 -6h1v1h-1zM10 -6h1v1h-1zM2 -5h1v1h-1zM6 -5h1v1h-1zM10 -5h1v1h-1zM2 -4h1v1h-1zM4 -4h1v1h-1zM8 -4h1v1h-1zM10 -4h1v1h-1zM2 -3h2v1h-2zM7 -3h1v1h-1zM10 -3h1v1h-1zM0 -2h2v1h-2zM5 -2h2v1h-2zM10 -2h1v1h-1zM10 -1h1v1h-1zM8 0h2v1h-2z"/><path id="g105" d="M5 -10h1v1h-1zM4 -9h1v1h-1zM6 -9h1v1h-1zM3 -8h1v1h-1zM7 -8h1v1h-1zM2 -7h1v1h-1zM5 -7h1v1h-1zM8 -7h1v1h-1zM0 -6h2v1h-2zM6 -6h1v1h-1zM9 -6h2v1h-2zM2 -4h7v1h-7zM7 -3h1v1h-1zM6 -2h1v1h-1zM6 -1h1v1h-1zM5 0h1v1h-1z"/><path id="g106" d="M5 -10h1v1h-1zM0 -9h11v1h-11zM3 -8h1v1h-1zM5 -8h1v1h-1zM7 -8h1v1h-1zM2 -7h1v1h-1zM5 -7h1v1h-1zM8 -7h1v1h-1zM0 -6h11v1h-11zM2 -5h1v1h-1zM8 -5h1v1h-1zM2 -4h7v1h-7zM2 -3h1v1h-1zM8 -3h1v1h-1zM2 -2h7v1h-7zM0 0h11v1h-11z"/><path id="g107" d="M1 -10h1v1h-1zM5 -10h1v1h-1zM2 -9h1v1h-1zM5 -9h6v1h-6zM4 -8h1v1h-1zM10 -8h1v1h-1zM0 -7h4v1h-4zM5 -7h4v1h-4zM10 -7h1v1h-1zM2 -6h1v1h-1zM5 -6h1v1h-1zM8 -6h1v1h-1zM10 -6h1v1h-1zM2 -5h1v1h-1zM5 -5h4v1h-4zM10 -5h1v1h-1zM2 -4h1v1h-1zM5 -4h1v1h-1zM8 -4h1v1h-1zM10 -4h1v1h-1zM2 -3h1v1h-1zM5 -3h1v1h-1zM8 -3h1v1h-1zM10 -3h1v1h-1zM2 -2h2v1h-2zM5 -2h4v1h-4zM10 -2h1v1h-1zM2 -1h1v1h-1zM10 -1h1v1h-1zM8 0h2v1h-2z"/><path id="g108" d="M2 -10h7v1h-7zM2 -9h1v1h-1zM8 -9h1v1h-1zM2 -8h7v1h-7zM2 -7h1v1h-1zM8 -7h1v1h-1zM0 -6h11v1h-11zM1 -5h1v1h-1zM4 -5h1v1h-1zM1 -4h9v1h-9zM1 -3h1v1h-1zM4 -3h1v1h-1zM6 -3h1v1h-1zM9 -3h1v1h-1zM1 -2h4v1h-4zM7 -2h2v1h-2zM0 -1h2v1h-2zM4 -1h1v1h-1zM7 -1h2v1h-2zM4 0h3v1h-3zM9 0h2v1h-2z"/><path id="g109" d="M3 -10h1v1h-1zM9 -10h2v1h-2zM0 -9h6v1h-6zM7 -9h2v1h-2zM1 -8h1v1h-1zM5 -8h1v1h-1zM7 -8h1v1h-1zM2 -7h1v1h-1zM4 -7h1v1h-1zM7 -7h1v1h-1zM0 -6h6v1h-6zM7 -6h4v1h-4zM3 -5h1v1h-1zM7 -5h1v1h-1zM9 -5h1v1h-1zM0 -4h6v1h-6zM7 -4h1v1h-1zM9 -4h1v1h-1zM3 -3h1v1h-1zM7 -3h1v1h-1zM9 -3h1v1h-1zM1 -2h1v1h-1zM3 -2h1v1h-1zM5 -2h1v1h-1zM7 -2h1v1h-1zM9 -2h1v1h-1zM0 -1h1v1h-1zM3 -1h1v1h-1zM6 -1h1v1h-1zM9 -1h1v1h-1zM2 0h2v1h-2zM5 0h1v1h-1zM9 0h1v1h-1z"/><path id="g110" d="M2 -10h9v1h-9zM2 -9h1v1h-1zM2 -8h1v1h-1zM6 -8h1v1h-1zM2 -7h1v1h-1zM6 -7h1v1h-1zM2 -6h1v1h-1zM4 -6h7v1h-7zM2 -5h1v1h-1zM6 -5h1v1h-1zM10 -5h1v1h-1zM2 -4h1v1h-1zM6 -4h1v1h-1zM10 -4h1v1h-1zM2 -3h1v1h-1zM5 -3h1v1h-1zM10 -3h1v1h-1zM1 -2h1v1h-1zM5 -2h1v1h-1zM10 -2h1v1h-1zM1 -1h1v1h-1zM4 -1h1v1h-1zM10 -1h1v1h-1zM0 0h1v1h-1zM3 0h1v1h-1zM8 0h2v1h-2z"/><path id="g111" d="M5 -10h1v1h-1zM5 -9h1v1h-1zM1 -8h9v1h-9zM1 -7h1v1h-1zM5 -7h1v1h-1zM9 -7h1v1h-1zM1 -6h1v1h-1zM5 -6h1v1h-1zM9 -6h1v1h-1zM1 -5h9v1h-9zM2 -4h1v1h-1zM5 -4h1v1h-1zM3 -3h1v1h-1zM5 -3h1v1h-1zM4 -2h1v1h-1zM3 -1h1v1h-1zM5 -1h2v1h-2zM0 0h3v1h-3zM7 0h4v1h-4z"/><path id="g112" d="M0 -10h7v1h-7zM10 -10h1v1h-1zM3 -9h1v1h-1zM10 -9h1v1h-1zM2 -8h1v1h-1zM8 -8h1v1h-1zM10 -8h1v1h-1zM1 -7h1v1h-1zM5 -7h1v1h-1zM8 -7h1v1h-1zM10 -7h1v1h-1zM0 -6h7v1h-7zM8 -6h1v1h-1zM10 -6h1v1h-1zM3 -5h1v1h-1zM8 -5h1v1h-1zM10 -5h1v1h-1zM1 -4h5v1h-5zM8 -4h1v1h-1zM10 -4h1v1h-1zM3 -3h1v1h-1zM8 -3h1v1h-1zM10 -3h1v1h-1zM3 -2h1v1h-1zM10 -2h1v1h-1zM3 -1h4v1h-4zM10 -1h1v1h-1zM0 0h3v1h-3zM8 0h3v1h-3z"/><path id="g113" d="M4 -10h1v1h-1zM5 -9h1v1h-1zM0 -8h11v1h-11zM3 -7h1v1h-1zM7 -7h1v1h-1zM3 -6h1v1h-1zM7 -6h1v1h-1zM3 -5h1v1h-1zM7 -5h1v1h-1zM4 -4h1v1h-1zM6 -4h1v1h-1zM4 -3h1v1h-1zM6 -3h1v1h-1zM5 -2h1v1h-1zM3 -1h2v1h-2zM6 -1h2v1h-2zM0 0h3v1h-3zM8 0h3v1h-3z"/><path id="g114" d="M3 -10h1v1h-1zM7 -10h1v1h-1zM3 -9h1v1h-1zM5 -9h1v1h-1zM7 -9h1v1h-1zM2 -8h1v1h-1zM5 -8h1v1h-1zM7 -8h1v1h-1zM2 -7h1v1h-1zM4 -7h6v1h-6zM1 -6h3v1h-3zM7 -6h1v1h-1zM0 -5h1v1h-1zM2 -5h1v1h-1zM7 -5h1v1h-1zM2 -4h1v1h-1zM4 -4h7v1h-7zM2 -3h1v1h-1zM7 -3h1v1h-1zM2 -2h1v1h-1zM7 -2h1v1h-1zM2 -1h1v1h-1zM7 -1h1v1h-1zM2 0h1v1h-1zM7 0h1v1h-1z"/><path id="g115" d="M0 -10h1v1h-1zM4 -10h6v1h-6zM1 -9h1v1h-1zM4 -9h1v1h-1zM9 -9h1v1h-1zM1 -8h1v1h-1zM4 -8h6v1h-6zM4 -7h1v1h-1zM9 -7h1v1h-1zM0 -6h2v1h-2zM4 -6h6v1h-6zM1 -5h1v1h-1zM4 -5h1v1h-1zM1 -4h1v1h-1zM4 -4h1v1h-1zM6 -4h2v1h-2zM9 -4h1v1h-1zM1 -3h1v1h-1zM4 -3h1v1h-1zM8 -3h1v1h-1zM1 -2h1v1h-1zM4 -2h3v1h-3zM9 -2h1v1h-1zM0 -1h1v1h-1zM2 -1h2v1h-2zM0 0h1v1h-1zM4 0h7v1h-7z"/><path id="g116" d="M2 -11h11v1h-11zM2 -10h2v1h-2zM2 -9h2v1h-2zM6 -9h2v1h-2zM2 -8h2v1h-2zM6 -8h2v1h-2zM2 -7h10v1h-10zM2 -6h2v1h-2zM6 -6h2v1h-2zM10 -6h2v1h-2zM2 -5h2v1h-2zM6 -5h2v1h-2zM10 -5h2v1h-2zM2 -4h2v1h-2zM6 -4h2v1h-2zM10 -4h2v1h-2zM2 -3h2v1h-2zM5 -3h2v1h-2zM10 -3h2v1h-2zM1 -2h2v1h-2zM5 -2h2v1h-2zM10 -2h2v1h-2zM1 -1h2v1h-2zM4 -1h2v1h-2zM10 -1h2v1h-2zM0 0h2v1h-2zM3 0h2v1h-2zM8 0h3v1h-3z"/><path id="g117" d="M5 -11h2v1h-2zM5 -10h2v1h-2zM1 -9h10v1h-10zM1 -8h2v1h-2zM5 -8h2v1h-2zM9 -8h2v1h-2zM1 -7h2v1h-2zM5 -7h2v1h-2zM9 -7h2v1h-2zM1 -6h10v1h-10zM2 -5h2v1h-2zM5 -5h2v1h-2zM3 -4h4v1h-4zM4 -3h2v1h-2zM3 -2h4v1h-4zM2 -1h2v1h-2zM6 -1h3v1h-3zM0 0h3v1h-3zM8 0h4v1h-4z"/><path id="g118" d="M2 -11h2v1h-2zM8 -11h2v1h-2zM2 -10h2v1h-2zM8 -10h2v1h-2zM1 -9h2v1h-2zM5 -9h8v1h-8zM1 -8h4v1h-4zM8 -8h2v1h-2zM0 -7h4v1h-4zM8 -7h2v1h-2zM2 -6h2v1h-2zM6 -6h6v1h-6zM1 -5h2v1h-2zM0 -4h2v1h-2zM3 -4h2v1h-2zM6 -4h6v1h-6zM0 -3h4v1h-4zM6 -3h2v1h-2zM10 -3h2v1h-2zM6 -2h2v1h-2zM10 -2h2v1h-2zM2 -1h3v1h-3zM6 -1h6v1h-6zM0 0h3v1h-3zM6 0h2v1h-2zM10 0h2v1h-2z"/><path id="g119" d="M1 -11h2v1h-2zM6 -11h2v1h-2zM1 -10h11v1h-11zM0 -9h2v1h-2zM3 -9h4v1h-4zM8 -9h2v1h-2zM2 -8h8v1h-8zM2 -7h2v1h-2zM8 -7h2v1h-2zM2 -6h8v1h-8zM2 -5h2v1h-2zM8 -5h2v1h-2zM2 -4h8v1h-8zM3 -3h2v1h-2zM7 -3h2v1h-2zM0 -2h12v1h-12zM3 -1h2v1h-2zM7 -1h2v1h-2zM1 0h3v1h-3zM7 0h2v1h-2z"/><path id="g120" d="M5 -11h2v1h-2zM0 -10h12v1h-12zM4 -9h4v1h-4zM3 -8h6v1h-6zM2 -7h2v1h-2zM5 -7h2v1h-2zM8 -7h2v1h-2zM0 -6h12v1h-12zM2 -5h2v1h-2zM8 -5h2v1h-2zM2 -4h8v1h-8zM2 -3h2v1h-2zM8 -3h2v1h-2zM2 -2h8v1h-8zM0 0h12v1h-12z"/><path id="g121" d="M1 -11h2v1h-2zM5 -11h2v1h-2zM2 -10h2v1h-2zM5 -10h2v1h-2zM2 -9h2v1h-2zM5 -9h8v1h-8zM4 -8h2v1h-2zM11 -8h2v1h-2zM0 -7h10v1h-10zM11 -7h2v1h-2zM2 -6h2v1h-2zM5 -6h2v1h-2zM8 -6h2v1h-2zM11 -6h2v1h-2zM2 -5h2v1h-2zM5 -5h5v1h-5zM11 -5h2v1h-2zM2 -4h2v1h-2zM5 -4h2v1h-2zM8 -4h2v1h-2zM11 -4h2v1h-2zM2 -3h2v1h-2zM5 -3h2v1h-2zM8 -3h2v1h-2zM11 -3h2v1h-2zM2 -2h8v1h-8zM11 -2h2v1h-2zM2 -1h2v1h-2zM11 -1h2v1h-2zM9 0h3v1h-3z"/><path id="g122" d="M2 -11h9v1h-9zM2 -10h2v1h-2zM5 -10h2v1h-2zM9 -10h2v1h-2zM2 -9h9v1h-9zM2 -8h2v1h-2zM5 -8h2v1h-2zM9 -8h2v1h-2zM2 -7h9v1h-9zM5 -6h2v1h-2zM0 -5h13v1h-13zM4 -4h4v1h-4zM3 -3h6v1h-6zM2 -2h2v1h-2zM5 -2h2v1h-2zM8 -2h2v1h-2zM0 -1h3v1h-3zM5 -1h2v1h-2zM9 -1h4v1h-4zM5 0h2v1h-2z"/><path id="g123" d="M3 -11h1v1h-1zM6 -11h1v1h-1zM3 -10h1v1h-1zM6 -10h5v1h-5zM0 -9h1v1h-1zM3 -9h1v1h-1zM5 -9h1v1h-1zM9 -9h1v1h-1zM1 -8h1v1h-1zM3 -8h2v1h-2zM6 -8h1v1h-1zM8 -8h1v1h-1zM1 -7h1v1h-1zM3 -7h1v1h-1zM7 -7h1v1h-1zM9 -7h1v1h-1zM3 -6h1v1h-1zM5 -6h2v1h-2zM9 -6h1v1h-1zM2 -5h2v1h-2zM9 -5h1v1h-1zM1 -4h1v1h-1zM3 -4h9v1h-9zM0 -3h1v1h-1zM3 -3h1v1h-1zM6 -3h1v1h-1zM9 -3h1v1h-1zM3 -2h1v1h-1zM7 -2h1v1h-1zM9 -2h1v1h-1zM3 -1h1v1h-1zM9 -1h1v1h-1zM3 0h1v1h-1zM8 0h2v1h-2z"/><path id="g124" d="M5 -11h1v1h-1zM0 -10h11v1h-11zM4 -9h3v1h-3zM3 -8h1v1h-1zM5 -8h1v1h-1zM7 -8h1v1h-1zM2 -7h1v1h-1zM5 -7h1v1h-1zM8 -7h1v1h-1zM0 -6h11v1h-11zM2 -5h1v1h-1zM8 -5h1v1h-1zM2 -4h7v1h-7zM2 -3h1v1h-1zM8 -3h1v1h-1zM2 -2h7v1h-7zM0 0h11v1h-11z"/><path id="g125" d="M1 -11h1v1h-1zM5 -11h1v1h-1zM2 -10h1v1h-1zM5 -10h1v1h-1zM2 -9h1v1h-1zM5 -9h7v1h-7zM4 -8h1v1h-1zM11 -8h1v1h-1zM0 -7h4v1h-4zM5 -7h4v1h-4zM11 -7h1v1h-1zM2 -6h1v1h-1zM5 -6h1v1h-1zM8 -6h1v1h-1zM11 -6h1v1h-1zM2 -5h1v1h-1zM5 -5h4v1h-4zM11 -5h1v1h-1zM2 -4h1v1h-1zM5 -4h1v1h-1zM8 -4h1v1h-1zM11 -4h1v1h-1zM2 -3h1v1h-1zM5 -3h1v1h-1zM8 -3h1v1h-1zM11 -3h1v1h-1zM2 -2h2v1h-2zM5 -2h4v1h-4zM11 -2h1v1h-1zM2 -1h1v1h-1zM11 -1h1v1h-1zM9 0h2v1h-2z"/><path id="g126" d="M2 -11h1v1h-1zM8 -11h1v1h-1zM2 -10h1v1h-1zM8 -10h1v1h-1zM1 -9h1v1h-1zM5 -9h7v1h-7zM1 -8h1v1h-1zM3 -8h1v1h-1zM8 -8h1v1h-1zM0 -7h3v1h-3zM8 -7h1v1h-1zM2 -6h1v1h-1zM6 -6h5v1h-5zM1 -5h1v1h-1zM0 -4h1v1h-1zM3 -4h1v1h-1zM6 -4h5v1h-5zM0 -3h3v1h-3zM6 -3h1v1h-1zM10 -3h1v1h-1zM6 -2h1v1h-1zM10 -2h1v1h-1zM2 -1h2v1h-2zM6 -1h5v1h-5zM0 0h2v1h-2zM6 0h1v1h-1zM10 0h1v1h-1z"/><path id="g127" d="M2 -11h8v1h-8zM2 -10h1v1h-1zM5 -10h1v1h-1zM9 -10h1v1h-1zM2 -9h8v1h-8zM2 -8h1v1h-1zM5 -8h1v1h-1zM9 -8h1v1h-1zM2 -7h8v1h-8zM5 -6h1v1h-1zM0 -5h12v1h-12zM4 -4h3v1h-3zM3 -3h1v1h-1zM5 -3h1v1h-1zM7 -3h1v1h-1zM2 -2h1v1h-1zM5 -2h1v1h-1zM8 -2h1v1h-1zM0 -1h2v1h-2zM5 -1h1v1h-1zM9 -1h3v1h-3zM5 0h1v1h-1z"/><path id="g128" d="M3 -11h1v1h-1zM5 -11h6v1h-6zM3 -10h1v1h-1zM5 -10h1v1h-1zM10 -10h1v1h-1zM2 -9h1v1h-1zM5 -9h1v1h-1zM10 -9h1v1h-1zM2 -8h1v1h-1zM5 -8h6v1h-6zM1 -7h2v1h-2zM8 -7h1v1h-1zM0 -6h1v1h-1zM2 -6h1v1h-1zM8 -6h1v1h-1zM2 -5h1v1h-1zM4 -5h8v1h-8zM2 -4h1v1h-1zM7 -4h2v1h-2zM2 -3h1v1h-1zM6 -3h1v1h-1zM8 -3h2v1h-2zM2 -2h1v1h-1zM5 -2h1v1h-1zM8 -2h1v1h-1zM10 -2h1v1h-1zM2 -1h1v1h-1zM4 -1h1v1h-1zM8 -1h1v1h-1zM11 -1h1v1h-1zM2 0h1v1h-1zM8 0h1v1h-1z"/><path id="g129" d="M5 -11h1v1h-1zM0 -10h11v1h-11zM4 -9h1v1h-1zM3 -8h1v1h-1zM2 -7h1v1h-1zM4 -7h6v1h-6zM2 -6h1v1h-1zM8 -6h1v1h-1zM1 -5h2v1h-2zM7 -5h1v1h-1zM0 -4h1v1h-1zM2 -4h1v1h-1zM4 -4h7v1h-7zM2 -3h1v1h-1zM7 -3h1v1h-1zM2 -2h1v1h-1zM7 -2h1v1h-1zM2 -1h1v1h-1zM7 -1h1v1h-1zM2 0h1v1h-1zM6 0h2v1h-2z"/><path id="g130" d="M11 -11h1v1h-1zM0 -10h7v1h-7zM11 -10h1v1h-1zM3 -9h1v1h-1zM8 -9h1v1h-1zM11 -9h1v1h-1zM2 -8h1v1h-1zM5 -8h1v1h-1zM8 -8h1v1h-1zM11 -8h1v1h-1zM1 -7h6v1h-6zM8 -7h1v1h-1zM11 -7h1v1h-1zM3 -6h1v1h-1zM8 -6h1v1h-1zM11 -6h1v1h-1zM3 -5h1v1h-1zM8 -5h1v1h-1zM11 -5h1v1h-1zM1 -4h6v1h-6zM8 -4h1v1h-1zM11 -4h1v1h-1zM3 -3h1v1h-1zM8 -3h1v1h-1zM11 -3h1v1h-1zM3 -2h1v1h-1zM11 -2h1v1h-1zM3 -1h4v1h-4zM11 -1h1v1h-1zM0 0h3v1h-3zM9 0h3v1h-3z"/><path id="g131" d="M3 -11h1v1h-1zM7 -11h1v1h-1zM2 -10h1v1h-1zM7 -10h1v1h-1zM1 -9h4v1h-4zM7 -9h4v1h-4zM1 -8h1v1h-1zM4 -8h1v1h-1zM6 -8h1v1h-1zM10 -8h1v1h-1zM1 -7h1v1h-1zM4 -7h2v1h-2zM10 -7h1v1h-1zM1 -6h1v1h-1zM4 -6h1v1h-1zM7 -6h1v1h-1zM10 -6h1v1h-1zM1 -5h4v1h-4zM8 -5h1v1h-1zM10 -5h1v1h-1zM1 -4h1v1h-1zM4 -4h1v1h-1zM8 -4h1v1h-1zM10 -4h1v1h-1zM1 -3h1v1h-1zM4 -3h1v1h-1zM10 -3h1v1h-1zM1 -2h1v1h-1zM4 -2h1v1h-1zM10 -2h1v1h-1zM1 -1h4v1h-4zM10 -1h1v1h-1zM1 0h1v1h-1zM4 0h1v1h-1zM8 0h2v1h-2z"/><path id="g132" d="M5 -11h1v1h-1zM6 -10h1v1h-1zM0 -9h12v1h-12zM3 -8h1v1h-1zM8 -8h1v1h-1zM3 -7h1v1h-1zM8 -7h1v1h-1zM3 -6h1v1h-1zM8 -6h1v1h-1zM4 -5h1v1h-1zM7 -5h1v1h-1zM4 -4h1v1h-1zM7 -4h1v1h-1zM5 -3h2v1h-2zM5 -2h2v1h-2zM3 -1h2v1h-2zM7 -1h2v1h-2zM0 0h3v1h-3zM9 0h3v1h-3z"/><path id="g133" d="M3 -11h1v1h-1zM8 -11h1v1h-1zM3 -10h1v1h-1zM5 -10h1v1h-1zM8 -10h1v1h-1zM2 -9h1v1h-1zM5 -9h1v1h-1zM8 -9h1v1h-1zM2 -8h1v1h-1zM5 -8h6v1h-6zM1 -7h2v1h-2zM4 -7h1v1h-1zM8 -7h1v1h-1zM0 -6h1v1h-1zM2 -6h1v1h-1zM8 -6h1v1h-1zM2 -5h1v1h-1zM4 -5h8v1h-8zM2 -4h1v1h-1zM8 -4h1v1h-1zM2 -3h1v1h-1zM8 -3h1v1h-1zM2 -2h1v1h-1zM8 -2h1v1h-1zM2 -1h1v1h-1zM8 -1h1v1h-1zM2 0h1v1h-1zM8 0h1v1h-1z"/><path id="g134" d="M1 -11h1v1h-1zM5 -11h1v1h-1zM7 -11h1v1h-1zM2 -10h1v1h-1zM5 -10h1v1h-1zM7 -10h1v1h-1zM2 -9h1v1h-1zM5 -9h6v1h-6zM4 -8h1v1h-1zM7 -8h1v1h-1zM7 -7h1v1h-1zM0 -6h3v1h-3zM4 -6h8v1h-8zM2 -5h1v1h-1zM6 -5h1v1h-1zM8 -5h1v1h-1zM2 -4h1v1h-1zM6 -4h1v1h-1zM8 -4h1v1h-1zM11 -4h1v1h-1zM2 -3h1v1h-1zM5 -3h1v1h-1zM8 -3h1v1h-1zM11 -3h1v1h-1zM2 -2h1v1h-1zM4 -2h1v1h-1zM9 -2h3v1h-3zM1 -1h1v1h-1zM3 -1h1v1h-1zM0 0h1v1h-1zM4 0h8v1h-8z"/><path id="g135" d="M2 -11h1v1h-1zM6 -11h5v1h-5zM2 -10h1v1h-1zM6 -10h1v1h-1zM10 -10h1v1h-1zM2 -9h1v1h-1zM7 -9h1v1h-1zM9 -9h1v1h-1zM0 -8h5v1h-5zM8 -8h1v1h-1zM2 -7h1v1h-1zM7 -7h1v1h-1zM9 -7h1v1h-1zM2 -6h1v1h-1zM5 -6h2v1h-2zM8 -6h1v1h-1zM10 -6h2v1h-2zM2 -5h2v1h-2zM8 -5h1v1h-1zM0 -4h3v1h-3zM6 -4h5v1h-5zM2 -3h1v1h-1zM8 -3h1v1h-1zM2 -2h1v1h-1zM5 -2h7v1h-7zM0 -1h1v1h-1zM2 -1h1v1h-1zM8 -1h1v1h-1zM1 0h1v1h-1zM8 0h1v1h-1z"/><path id="g136" d="M2 -11h1v1h-1zM6 -11h1v1h-1zM2 -10h1v1h-1zM6 -10h1v1h-1zM9 -10h2v1h-2zM2 -9h1v1h-1zM6 -9h3v1h-3zM0 -8h5v1h-5zM6 -8h1v1h-1zM11 -8h1v1h-1zM2 -7h1v1h-1zM6 -7h6v1h-6zM2 -6h1v1h-1zM2 -5h2v1h-2zM6 -5h5v1h-5zM0 -4h3v1h-3zM6 -4h1v1h-1zM10 -4h1v1h-1zM2 -3h1v1h-1zM6 -3h5v1h-5zM2 -2h1v1h-1zM6 -2h1v1h-1zM10 -2h1v1h-1zM0 -1h1v1h-1zM2 -1h1v1h-1zM6 -1h1v1h-1zM10 -1h1v1h-1zM1 0h1v1h-1zM6 0h5v1h-5z"/><path id="g137" d="M5 -11h1v1h-1zM6 -10h1v1h-1zM1 -9h11v1h-11zM1 -8h1v1h-1zM11 -8h1v1h-1zM0 -7h1v1h-1zM2 -7h8v1h-8zM6 -6h1v1h-1zM3 -5h1v1h-1zM6 -5h1v1h-1zM3 -4h1v1h-1zM6 -4h4v1h-4zM3 -3h1v1h-1zM6 -3h1v1h-1zM2 -2h1v1h-1zM4 -2h1v1h-1zM6 -2h1v1h-1zM1 -1h1v1h-1zM5 -1h2v1h-2zM0 0h1v1h-1zM6 0h6v1h-6z"/><path id="g138" d="M2 -10h8v1h-8zM2 -9h1v1h-1zM9 -9h1v1h-1zM2 -8h1v1h-1zM9 -8h1v1h-1zM2 -7h1v1h-1zM9 -7h1v1h-1zM2 -6h8v1h-8zM2 -5h1v1h-1zM9 -5h1v1h-1zM2 -4h1v1h-1zM9 -4h1v1h-1zM2 -3h1v1h-1zM9 -3h1v1h-1zM2 -2h1v1h-1zM9 -2h1v1h-1zM2 -1h8v1h-8zM2 0h1v1h-1zM9 0h1v1h-1z"/><path id="g139" d="M1 -11h1v1h-1zM4 -11h1v1h-1zM7 -11h5v1h-5zM1 -10h1v1h-1zM4 -10h1v1h-1zM7 -10h1v1h-1zM11 -10h1v1h-1zM0 -9h6v1h-6zM7 -9h1v1h-1zM11 -9h1v1h-1zM1 -8h1v1h-1zM4 -8h1v1h-1zM7 -8h5v1h-5zM1 -7h4v1h-4zM7 -7h1v1h-1zM11 -7h1v1h-1zM1 -6h1v1h-1zM4 -6h1v1h-1zM7 -6h1v1h-1zM11 -6h1v1h-1zM1 -5h4v1h-4zM7 -5h1v1h-1zM11 -5h1v1h-1zM1 -4h1v1h-1zM4 -4h1v1h-1zM7 -4h5v1h-5zM0 -3h6v1h-6zM7 -3h1v1h-1zM11 -3h1v1h-1zM7 -2h1v1h-1zM11 -2h1v1h-1zM1 -1h1v1h-1zM4 -1h1v1h-1zM7 -1h1v1h-1zM11 -1h1v1h-1zM0 0h1v1h-1zM5 0h2v1h-2zM10 0h2v1h-2z"/></defs>
<clipPath id="tc"><rect x="16" y="112" width="752" height="435"/></clipPath>
<g fill="#000" clip-path="url(#tc)"><use href="#g0" x="297" y="124"/><use href="#g1" x="309" y="124"/><use href="#g2" x="321" y="124"/><use href="#g3" x="333" y="124"/><use href="#g4" x="513" y="136"/><use href="#g5" x="525" y="136"/><use href="#g6" x="537" y="136"/><use href="#g7" x="549" y="136"/><use href="#g8" x="561" y="136"/><use href="#g9" x="573" y="136"/><use href="#g10" x="579" y="136"/><use href="#g11" x="585" y="136"/><use href="#g9" x="591" y="136"/><use href="#g11" x="597" y="136"/><use href="#g11" x="603" y="136"/><use href="#g12" x="609" y="136"/><use href="#g10" x="615" y="136"/><use href="#g13" x="21" y="148"/><use href="#g13" x="27" y="148"/><use href="#g13" x="33" y="148"/><use href="#g13" x="39" y="148"/><use href="#g13" x="45" y="148"/><use href="#g13" x="51" y="148"/><use href="#g13" x="57" y="148"/><use href="#g13" x="63" y="148"/><use href="#g13" x="69" y="148"/><use href="#g13" x="75" y="148"/><use href="#g13" x="81" y="148"/><use href="#g13" x="87" y="148"/><use href="#g13" x="93" y="148"/><use href="#g13" x="99" y="148"/><use href="#g13" x="105" y="148"/><use href="#g13" x="111" y="148"/><use href="#g13" x="117" y="148"/><use href="#g13" x="123" y="148"/><use href="#g13" x="129" y="148"/><use href="#g13" x="135" y="148"/><use href="#g13" x="141" y="148"/><use href="#g13" x="147" y="148"/><use href="#g13" x="153" y="148"/><use href="#g13" x="159" y="148"/><use href="#g13" x="165" y="148"/><use href="#g13" x="171" y="148"/><use href="#g13" x="177" y="148"/><use href="#g13" x="183" y="148"/><use href="#g13" x="189" y="148"/><use href="#g13" x="195" y="148"/><use href="#g13" x="201" y="148"/><use href="#g13" x="207" y="148"/><use href="#g13" x="213" y="148"/><use href="#g13" x="219" y="148"/><use href="#g13" x="225" y="148"/><use href="#g13" x="231" y="148"/><use href="#g13" x="237" y="148"/><use href="#g13" x="243" y="148"/><use href="#g13" x="249" y="148"/><use href="#g13" x="255" y="148"/><use href="#g13" x="261" y="148"/><use href="#g13" x="267" y="148"/><use href="#g13" x="273" y="148"/><use href="#g13" x="279" y="148"/><use href="#g13" x="285" y="148"/><use href="#g13" x="291" y="148"/><use href="#g13" x="297" y="148"/><use href="#g13" x="303" y="148"/><use href="#g13" x="309" y="148"/><use href="#g13" x="315" y="148"/><use href="#g13" x="321" y="148"/><use href="#g13" x="327" y="148"/><use href="#g13" x="333" y="148"/><use href="#g13" x="339" y="148"/><use href="#g13" x="345" y="148"/><use href="#g13" x="351" y="148"/><use href="#g13" x="357" y="148"/><use href="#g13" x="363" y="148"/><use href="#g13" x="369" y="148"/><use href="#g13" x="375" y="148"/><use href="#g13" x="381" y="148"/><use href="#g13" x="387" y="148"/><use href="#g13" x="393" y="148"/><use href="#g13" x="399" y="148"/><use href="#g13" x="405" y="148"/><use href="#g13" x="411" y="148"/><use href="#g13" x="417" y="148"/><use href="#g13" x="423" y="148"/><use href="#g13" x="429" y="148"/><use href="#g13" x="435" y="148"/><use href="#g13" x="441" y="148"/><use href="#g13" x="447" y="148"/><use href="#g13" x="453" y="148"/><use href="#g13" x="459" y="148"/><use href="#g13" x="465" y="148"/><use href="#g13" x="471" y="148"/><use href="#g13" x="477" y="148"/><use href="#g13" x="483" y="148"/><use href="#g13" x="489" y="148"/><use href="#g13" x="495" y="148"/><use href="#g13" x="501" y="148"/><use href="#g13" x="507" y="148"/><use href="#g13" x="513" y="148"/><use href="#g13" x="519" y="148"/><use href="#g13" x="525" y="148"/><use href="#g13" x="531" y="148"/><use href="#g13" x="537" y="148"/><use href="#g13" x="543" y="148"/><use href="#g13" x="549" y="148"/><use href="#g13" x="555" y="148"/><use href="#g13" x="561" y="148"/><use href="#g13" x="567" y="148"/><use href="#g13" x="573" y="148"/><use href="#g13" x="579" y="148"/><use href="#g13" x="585" y="148"/><use href="#g13" x="591" y="148"/><use href="#g13" x="597" y="148"/><use href="#g13" x="603" y="148"/><use href="#g13" x="609" y="148"/><use href="#g13" x="615" y="148"/><use href="#g14" x="273" y="160"/><use href="#g15" x="285" y="160"/><use href="#g16" x="297" y="160"/><use href="#g17" x="309" y="160"/><use href="#g18" x="321" y="160"/><use href="#g19" x="333" y="160"/><use href="#g20" x="339" y="160"/><use href="#g21" x="351" y="160"/><use href="#g22" x="363" y="160"/><use href="#g23" x="21" y="172"/><use href="#g24" x="33" y="172"/><use href="#g25" x="45" y="172"/><use href="#g8" x="57" y="172"/><use href="#g26" x="81" y="172"/><use href="#g27" x="87" y="172"/><use href="#g28" x="93" y="172"/><use href="#g11" x="99" y="172"/><use href="#g10" x="105" y="172"/><use href="#g23" x="171" y="172"/><use href="#g24" x="183" y="172"/><use href="#g29" x="195" y="172"/><use href="#g30" x="207" y="172"/><use href="#g8" x="219" y="172"/><use href="#g26" x="231" y="172"/><use href="#g27" x="237" y="172"/><use href="#g28" x="243" y="172"/><use href="#g11" x="249" y="172"/><use href="#g10" x="255" y="172"/><use href="#g31" x="21" y="184"/><use href="#g2" x="33" y="184"/><use href="#g8" x="45" y="184"/><use href="#g9" x="57" y="184"/><use href="#g10" x="63" y="184"/><use href="#g11" x="69" y="184"/><use href="#g9" x="75" y="184"/><use href="#g11" x="81" y="184"/><use href="#g11" x="87" y="184"/><use href="#g12" x="93" y="184"/><use href="#g10" x="99" y="184"/><use href="#g32" x="261" y="232"/><use href="#g33" x="273" y="232"/><use href="#g34" x="285" y="232"/><use href="#g35" x="297" y="232"/><use href="#g36" x="321" y="232"/><use href="#g37" x="333" y="232"/><use href="#g8" x="345" y="232"/><use href="#g38" x="357" y="232"/><use href="#g39" x="369" y="232"/><use href="#g36" x="381" y="232"/><use href="#g13" x="21" y="244"/><use href="#g13" x="27" y="244"/><use href="#g13" x="33" y="244"/><use href="#g13" x="39" y="244"/><use href="#g13" x="45" y="244"/><use href="#g13" x="51" y="244"/><use href="#g13" x="57" y="244"/><use href="#g13" x="63" y="244"/><use href="#g13" x="69" y="244"/><use href="#g13" x="75" y="244"/><use href="#g13" x="81" y="244"/><use href="#g13" x="87" y="244"/><use href="#g13" x="93" y="244"/><use href="#g13" x="99" y="244"/><use href="#g13" x="105" y="244"/><use href="#g13" x="111" y="244"/><use href="#g13" x="117" y="244"/><use href="#g13" x="123" y="244"/><use href="#g13" x="129" y="244"/><use href="#g13" x="135" y="244"/><use href="#g13" x="141" y="244"/><use href="#g13" x="147" y="244"/><use href="#g13" x="153" y="244"/><use href="#g13" x="159" y="244"/><use href="#g13" x="165" y="244"/><use href="#g13" x="171" y="244"/><use href="#g13" x="177" y="244"/><use href="#g13" x="183" y="244"/><use href="#g13" x="189" y="244"/><use href="#g13" x="195" y="244"/><use href="#g13" x="201" y="244"/><use href="#g13" x="207" y="244"/><use href="#g13" x="213" y="244"/><use href="#g13" x="219" y="244"/><use href="#g13" x="225" y="244"/><use href="#g13" x="231" y="244"/><use href="#g13" x="237" y="244"/><use href="#g13" x="243" y="244"/><use href="#g13" x="249" y="244"/><use href="#g13" x="255" y="244"/><use href="#g13" x="261" y="244"/><use href="#g13" x="267" y="244"/><use href="#g13" x="273" y="244"/><use href="#g13" x="279" y="244"/><use href="#g13" x="285" y="244"/><use href="#g13" x="291" y="244"/><use href="#g13" x="297" y="244"/><use href="#g13" x="303" y="244"/><use href="#g13" x="309" y="244"/><use href="#g13" x="315" y="244"/><use href="#g13" x="321" y="244"/><use href="#g13" x="327" y="244"/><use href="#g13" x="333" y="244"/><use href="#g13" x="339" y="244"/><use href="#g13" x="345" y="244"/><use href="#g13" x="351" y="244"/><use href="#g13" x="357" y="244"/><use href="#g13" x="363" y="244"/><use href="#g13" x="369" y="244"/><use href="#g13" x="375" y="244"/><use href="#g13" x="381" y="244"/><use href="#g13" x="387" y="244"/><use href="#g13" x="393" y="244"/><use href="#g13" x="399" y="244"/><use href="#g13" x="405" y="244"/><use href="#g13" x="411" y="244"/><use href="#g13" x="417" y="244"/><use href="#g13" x="423" y="244"/><use href="#g13" x="429" y="244"/><use href="#g13" x="435" y="244"/><use href="#g13" x="441" y="244"/><use href="#g13" x="447" y="244"/><use href="#g13" x="453" y="244"/><use href="#g13" x="459" y="244"/><use href="#g13" x="465" y="244"/><use href="#g13" x="471" y="244"/><use href="#g13" x="477" y="244"/><use href="#g13" x="483" y="244"/><use href="#g13" x="489" y="244"/><use href="#g13" x="495" y="244"/><use href="#g13" x="501" y="244"/><use href="#g13" x="507" y="244"/><use href="#g13" x="513" y="244"/><use href="#g13" x="519" y="244"/><use href="#g13" x="525" y="244"/><use href="#g13" x="531" y="244"/><use href="#g13" x="537" y="244"/><use href="#g13" x="543" y="244"/><use href="#g13" x="549" y="244"/><use href="#g13" x="555" y="244"/><use href="#g13" x="561" y="244"/><use href="#g13" x="567" y="244"/><use href="#g13" x="573" y="244"/><use href="#g13" x="579" y="244"/><use href="#g13" x="585" y="244"/><use href="#g13" x="591" y="244"/><use href="#g13" x="597" y="244"/><use href="#g13" x="603" y="244"/><use href="#g13" x="609" y="244"/><use href="#g13" x="615" y="244"/><use href="#g2" x="21" y="256"/><use href="#g40" x="33" y="256"/><use href="#g16" x="45" y="256"/><use href="#g41" x="57" y="256"/><use href="#g8" x="69" y="256"/><use href="#g12" x="147" y="256"/><use href="#g11" x="153" y="256"/><use href="#g11" x="159" y="256"/><use href="#g10" x="165" y="256"/><use href="#g11" x="171" y="256"/><use href="#g42" x="177" y="256"/><use href="#g26" x="183" y="256"/><use href="#g43" x="189" y="256"/><use href="#g26" x="195" y="256"/><use href="#g12" x="201" y="256"/><use href="#g14" x="231" y="256"/><use href="#g44" x="243" y="256"/><use href="#g45" x="255" y="256"/><use href="#g46" x="267" y="256"/><use href="#g47" x="279" y="256"/><use href="#g8" x="291" y="256"/><use href="#g10" x="393" y="256"/><use href="#g43" x="399" y="256"/><use href="#g10" x="405" y="256"/><use href="#g10" x="411" y="256"/><use href="#g14" x="441" y="256"/><use href="#g44" x="453" y="256"/><use href="#g48" x="465" y="256"/><use href="#g49" x="477" y="256"/><use href="#g33" x="489" y="256"/><use href="#g8" x="501" y="256"/><use href="#g10" x="597" y="256"/><use href="#g43" x="603" y="256"/><use href="#g10" x="609" y="256"/><use href="#g10" x="615" y="256"/><use href="#g50" x="21" y="268"/><use href="#g51" x="39" y="268"/><use href="#g33" x="57" y="268"/><use href="#g8" x="69" y="268"/><use href="#g10" x="183" y="268"/><use href="#g43" x="189" y="268"/><use href="#g10" x="195" y="268"/><use href="#g10" x="201" y="268"/><use href="#g2" x="231" y="268"/><use href="#g52" x="243" y="268"/><use href="#g16" x="255" y="268"/><use href="#g41" x="267" y="268"/><use href="#g8" x="279" y="268"/><use href="#g12" x="357" y="268"/><use href="#g11" x="363" y="268"/><use href="#g28" x="369" y="268"/><use href="#g9" x="375" y="268"/><use href="#g53" x="381" y="268"/><use href="#g54" x="387" y="268"/><use href="#g26" x="393" y="268"/><use href="#g43" x="399" y="268"/><use href="#g26" x="405" y="268"/><use href="#g12" x="411" y="268"/><use href="#g55" x="441" y="268"/><use href="#g56" x="453" y="268"/><use href="#g32" x="465" y="268"/><use href="#g33" x="477" y="268"/><use href="#g8" x="489" y="268"/><use href="#g9" x="561" y="268"/><use href="#g54" x="567" y="268"/><use href="#g54" x="573" y="268"/><use href="#g54" x="579" y="268"/><use href="#g12" x="585" y="268"/><use href="#g53" x="591" y="268"/><use href="#g12" x="597" y="268"/><use href="#g43" x="603" y="268"/><use href="#g26" x="609" y="268"/><use href="#g12" x="615" y="268"/><use href="#g57" x="21" y="280"/><use href="#g58" x="33" y="280"/><use href="#g59" x="45" y="280"/><use href="#g60" x="57" y="280"/><use href="#g8" x="69" y="280"/><use href="#g10" x="183" y="280"/><use href="#g43" x="189" y="280"/><use href="#g10" x="195" y="280"/><use href="#g10" x="201" y="280"/><use href="#g61" x="231" y="280"/><use href="#g62" x="249" y="280"/><use href="#g33" x="267" y="280"/><use href="#g8" x="279" y="280"/><use href="#g10" x="393" y="280"/><use href="#g43" x="399" y="280"/><use href="#g10" x="405" y="280"/><use href="#g10" x="411" y="280"/><use href="#g63" x="441" y="280"/><use href="#g64" x="459" y="280"/><use href="#g65" x="477" y="280"/><use href="#g8" x="489" y="280"/><use href="#g11" x="585" y="280"/><use href="#g26" x="591" y="280"/><use href="#g43" x="597" y="280"/><use href="#g27" x="603" y="280"/><use href="#g53" x="609" y="280"/><use href="#g66" x="615" y="280"/><use href="#g67" x="21" y="292"/><use href="#g58" x="33" y="292"/><use href="#g20" x="45" y="292"/><use href="#g21" x="57" y="292"/><use href="#g59" x="69" y="292"/><use href="#g60" x="81" y="292"/><use href="#g8" x="93" y="292"/><use href="#g12" x="159" y="292"/><use href="#g9" x="165" y="292"/><use href="#g42" x="171" y="292"/><use href="#g26" x="177" y="292"/><use href="#g10" x="183" y="292"/><use href="#g43" x="189" y="292"/><use href="#g10" x="195" y="292"/><use href="#g10" x="201" y="292"/><use href="#g23" x="231" y="292"/><use href="#g24" x="243" y="292"/><use href="#g68" x="255" y="292"/><use href="#g69" x="267" y="292"/><use href="#g8" x="279" y="292"/><use href="#g12" x="357" y="292"/><use href="#g11" x="363" y="292"/><use href="#g28" x="369" y="292"/><use href="#g9" x="375" y="292"/><use href="#g53" x="381" y="292"/><use href="#g54" x="387" y="292"/><use href="#g26" x="393" y="292"/><use href="#g43" x="399" y="292"/><use href="#g26" x="405" y="292"/><use href="#g12" x="411" y="292"/><use href="#g70" x="441" y="292"/><use href="#g71" x="453" y="292"/><use href="#g72" x="465" y="292"/><use href="#g32" x="477" y="292"/><use href="#g33" x="489" y="292"/><use href="#g8" x="501" y="292"/><use href="#g10" x="597" y="292"/><use href="#g43" x="603" y="292"/><use href="#g10" x="609" y="292"/><use href="#g10" x="615" y="292"/><use href="#g45" x="21" y="304"/><use href="#g46" x="39" y="304"/><use href="#g47" x="57" y="304"/><use href="#g8" x="69" y="304"/><use href="#g10" x="183" y="304"/><use href="#g43" x="189" y="304"/><use href="#g10" x="195" y="304"/><use href="#g10" x="201" y="304"/><use href="#g48" x="231" y="304"/><use href="#g49" x="243" y="304"/><use href="#g33" x="255" y="304"/><use href="#g73" x="267" y="304"/><use href="#g56" x="279" y="304"/><use href="#g8" x="291" y="304"/><use href="#g54" x="363" y="304"/><use href="#g26" x="369" y="304"/><use href="#g42" x="375" y="304"/><use href="#g54" x="381" y="304"/><use href="#g27" x="387" y="304"/><use href="#g54" x="393" y="304"/><use href="#g43" x="399" y="304"/><use href="#g10" x="405" y="304"/><use href="#g10" x="411" y="304"/><use href="#g74" x="441" y="304"/><use href="#g75" x="453" y="304"/><use href="#g48" x="465" y="304"/><use href="#g49" x="477" y="304"/><use href="#g33" x="489" y="304"/><use href="#g8" x="501" y="304"/><use href="#g10" x="597" y="304"/><use href="#g43" x="603" y="304"/><use href="#g10" x="609" y="304"/><use href="#g10" x="615" y="304"/><use href="#g61" x="21" y="316"/><use href="#g62" x="33" y="316"/><use href="#g76" x="45" y="316"/><use href="#g77" x="57" y="316"/><use href="#g33" x="69" y="316"/><use href="#g78" x="81" y="316"/><use href="#g8" x="93" y="316"/><use href="#g10" x="183" y="316"/><use href="#g43" x="189" y="316"/><use href="#g10" x="195" y="316"/><use href="#g10" x="201" y="316"/><use href="#g67" x="255" y="340"/><use href="#g58" x="267" y="340"/><use href="#g79" x="279" y="340"/><use href="#g80" x="291" y="340"/><use href="#g13" x="21" y="352"/><use href="#g13" x="27" y="352"/><use href="#g13" x="33" y="352"/><use href="#g13" x="39" y="352"/><use href="#g13" x="45" y="352"/><use href="#g13" x="51" y="352"/><use href="#g13" x="57" y="352"/><use href="#g13" x="63" y="352"/><use href="#g13" x="69" y="352"/><use href="#g13" x="75" y="352"/><use href="#g13" x="81" y="352"/><use href="#g13" x="87" y="352"/><use href="#g13" x="93" y="352"/><use href="#g13" x="99" y="352"/><use href="#g13" x="105" y="352"/><use href="#g13" x="111" y="352"/><use href="#g13" x="117" y="352"/><use href="#g13" x="123" y="352"/><use href="#g13" x="129" y="352"/><use href="#g13" x="135" y="352"/><use href="#g13" x="141" y="352"/><use href="#g13" x="147" y="352"/><use href="#g13" x="153" y="352"/><use href="#g13" x="159" y="352"/><use href="#g13" x="165" y="352"/><use href="#g13" x="171" y="352"/><use href="#g13" x="177" y="352"/><use href="#g13" x="183" y="352"/><use href="#g13" x="189" y="352"/><use href="#g13" x="195" y="352"/><use href="#g13" x="201" y="352"/><use href="#g13" x="207" y="352"/><use href="#g13" x="213" y="352"/><use href="#g13" x="219" y="352"/><use href="#g13" x="225" y="352"/><use href="#g13" x="231" y="352"/><use href="#g13" x="237" y="352"/><use href="#g13" x="243" y="352"/><use href="#g13" x="249" y="352"/><use href="#g13" x="255" y="352"/><use href="#g13" x="261" y="352"/><use href="#g13" x="267" y="352"/><use href="#g13" x="273" y="352"/><use href="#g13" x="279" y="352"/><use href="#g13" x="285" y="352"/><use href="#g13" x="291" y="352"/><use href="#g13" x="297" y="352"/><use href="#g13" x="303" y="352"/><use href="#g13" x="309" y="352"/><use href="#g13" x="315" y="352"/><use href="#g13" x="321" y="352"/><use href="#g13" x="327" y="352"/><use href="#g13" x="333" y="352"/><use href="#g13" x="339" y="352"/><use href="#g13" x="345" y="352"/><use href="#g13" x="351" y="352"/><use href="#g13" x="357" y="352"/><use href="#g13" x="363" y="352"/><use href="#g13" x="369" y="352"/><use href="#g13" x="375" y="352"/><use href="#g13" x="381" y="352"/><use href="#g13" x="387" y="352"/><use href="#g13" x="393" y="352"/><use href="#g13" x="399" y="352"/><use href="#g13" x="405" y="352"/><use href="#g13" x="411" y="352"/><use href="#g13" x="417" y="352"/><use href="#g13" x="423" y="352"/><use href="#g13" x="429" y="352"/><use href="#g13" x="435" y="352"/><use href="#g13" x="441" y="352"/><use href="#g13" x="447" y="352"/><use href="#g13" x="453" y="352"/><use href="#g13" x="459" y="352"/><use href="#g13" x="465" y="352"/><use href="#g13" x="471" y="352"/><use href="#g13" x="477" y="352"/><use href="#g13" x="483" y="352"/><use href="#g13" x="489" y="352"/><use href="#g13" x="495" y="352"/><use href="#g13" x="501" y="352"/><use href="#g13" x="507" y="352"/><use href="#g13" x="513" y="352"/><use href="#g13" x="519" y="352"/><use href="#g13" x="525" y="352"/><use href="#g13" x="531" y="352"/><use href="#g13" x="537" y="352"/><use href="#g13" x="543" y="352"/><use href="#g13" x="549" y="352"/><use href="#g13" x="555" y="352"/><use href="#g13" x="561" y="352"/><use href="#g13" x="567" y="352"/><use href="#g13" x="573" y="352"/><use href="#g13" x="579" y="352"/><use href="#g13" x="585" y="352"/><use href="#g13" x="591" y="352"/><use href="#g13" x="597" y="352"/><use href="#g13" x="603" y="352"/><use href="#g13" x="609" y="352"/><use href="#g13" x="615" y="352"/><use href="#g13" x="621" y="352"/><use href="#g13" x="627" y="352"/><use href="#g13" x="633" y="352"/><use href="#g13" x="639" y="352"/><use href="#g13" x="645" y="352"/><use href="#g13" x="651" y="352"/><use href="#g13" x="657" y="352"/><use href="#g13" x="663" y="352"/><use href="#g13" x="669" y="352"/><use href="#g13" x="675" y="352"/><use href="#g13" x="681" y="352"/><use href="#g13" x="687" y="352"/><use href="#g13" x="693" y="352"/><use href="#g13" x="699" y="352"/><use href="#g13" x="705" y="352"/><use href="#g13" x="711" y="352"/><use href="#g13" x="717" y="352"/><use href="#g13" x="723" y="352"/><use href="#g13" x="729" y="352"/><use href="#g81" x="21" y="364"/><use href="#g14" x="27" y="364"/><use href="#g15" x="39" y="364"/><use href="#g82" x="51" y="364"/><use href="#g81" x="63" y="364"/><use href="#g83" x="105" y="364"/><use href="#g37" x="117" y="364"/><use href="#g81" x="165" y="364"/><use href="#g14" x="171" y="364"/><use href="#g44" x="183" y="364"/><use href="#g2" x="195" y="364"/><use href="#g81" x="207" y="364"/><use href="#g84" x="213" y="364"/><use href="#g58" x="225" y="364"/><use href="#g31" x="237" y="364"/><use href="#g2" x="249" y="364"/><use href="#g81" x="261" y="364"/><use href="#g85" x="267" y="364"/><use href="#g86" x="279" y="364"/><use href="#g48" x="285" y="364"/><use href="#g81" x="297" y="364"/><use href="#g87" x="303" y="364"/><use href="#g86" x="315" y="364"/><use href="#g88" x="321" y="364"/><use href="#g81" x="333" y="364"/><use href="#g67" x="345" y="364"/><use href="#g58" x="357" y="364"/><use href="#g89" x="369" y="364"/><use href="#g81" x="381" y="364"/><use href="#g84" x="393" y="364"/><use href="#g58" x="405" y="364"/><use href="#g90" x="417" y="364"/><use href="#g81" x="435" y="364"/><use href="#g91" x="447" y="364"/><use href="#g16" x="459" y="364"/><use href="#g17" x="471" y="364"/><use href="#g81" x="489" y="364"/><use href="#g16" x="501" y="364"/><use href="#g17" x="513" y="364"/><use href="#g90" x="525" y="364"/><use href="#g81" x="543" y="364"/><use href="#g92" x="555" y="364"/><use href="#g93" x="567" y="364"/><use href="#g59" x="579" y="364"/><use href="#g60" x="591" y="364"/><use href="#g81" x="609" y="364"/><use href="#g20" x="621" y="364"/><use href="#g21" x="633" y="364"/><use href="#g59" x="645" y="364"/><use href="#g60" x="657" y="364"/><use href="#g81" x="669" y="364"/><use href="#g48" x="681" y="364"/><use href="#g49" x="693" y="364"/><use href="#g33" x="705" y="364"/><use href="#g81" x="729" y="364"/><use href="#g13" x="21" y="376"/><use href="#g13" x="27" y="376"/><use href="#g13" x="33" y="376"/><use href="#g13" x="39" y="376"/><use href="#g13" x="45" y="376"/><use href="#g13" x="51" y="376"/><use href="#g13" x="57" y="376"/><use href="#g13" x="63" y="376"/><use href="#g13" x="69" y="376"/><use href="#g13" x="75" y="376"/><use href="#g13" x="81" y="376"/><use href="#g13" x="87" y="376"/><use href="#g13" x="93" y="376"/><use href="#g13" x="99" y="376"/><use href="#g13" x="105" y="376"/><use href="#g13" x="111" y="376"/><use href="#g13" x="117" y="376"/><use href="#g13" x="123" y="376"/><use href="#g13" x="129" y="376"/><use href="#g13" x="135" y="376"/><use href="#g13" x="141" y="376"/><use href="#g13" x="147" y="376"/><use href="#g13" x="153" y="376"/><use href="#g13" x="159" y="376"/><use href="#g13" x="165" y="376"/><use href="#g13" x="171" y="376"/><use href="#g13" x="177" y="376"/><use href="#g13" x="183" y="376"/><use href="#g13" x="189" y="376"/><use href="#g13" x="195" y="376"/><use href="#g13" x="201" y="376"/><use href="#g13" x="207" y="376"/><use href="#g13" x="213" y="376"/><use href="#g13" x="219" y="376"/><use href="#g13" x="225" y="376"/><use href="#g13" x="231" y="376"/><use href="#g13" x="237" y="376"/><use href="#g13" x="243" y="376"/><use href="#g13" x="249" y="376"/><use href="#g13" x="255" y="376"/><use href="#g13" x="261" y="376"/><use href="#g13" x="267" y="376"/><use href="#g13" x="273" y="376"/><use href="#g13" x="279" y="376"/><use href="#g13" x="285" y="376"/><use href="#g13" x="291" y="376"/><use href="#g13" x="297" y="376"/><use href="#g13" x="303" y="376"/><use href="#g13" x="309" y="376"/><use href="#g13" x="315" y="376"/><use href="#g13" x="321" y="376"/><use href="#g13" x="327" y="376"/><use href="#g13" x="333" y="376"/><use href="#g13" x="339" y="376"/><use href="#g13" x="345" y="376"/><use href="#g13" x="351" y="376"/><use href="#g13" x="357" y="376"/><use href="#g13" x="363" y="376"/><use href="#g13" x="369" y="376"/><use href="#g13" x="375" y="376"/><use href="#g13" x="381" y="376"/><use href="#g13" x="387" y="376"/><use href="#g13" x="393" y="376"/><use href="#g13" x="399" y="376"/><use href="#g13" x="405" y="376"/><use href="#g13" x="411" y="376"/><use href="#g13" x="417" y="376"/><use href="#g13" x="423" y="376"/><use href="#g13" x="429" y="376"/><use href="#g13" x="435" y="376"/><use href="#g13" x="441" y="376"/><use href="#g13" x="447" y="376"/><use href="#g13" x="453" y="376"/><use href="#g13" x="459" y="376"/><use href="#g13" x="465" y="376"/><use href="#g13" x="471" y="376"/><use href="#g13" x="477" y="376"/><use href="#g13" x="483" y="376"/><use href="#g13" x="489" y="376"/><use href="#g13" x="495" y="376"/><use href="#g13" x="501" y="376"/><use href="#g13" x="507" y="376"/><use href="#g13" x="513" y="376"/><use href="#g13" x="519" y="376"/><use href="#g13" x="525" y="376"/><use href="#g13" x="531" y="376"/><use href="#g13" x="537" y="376"/><use href="#g13" x="543" y="376"/><use href="#g13" x="549" y="376"/><use href="#g13" x="555" y="376"/><use href="#g13" x="561" y="376"/><use href="#g13" x="567" y="376"/><use href="#g13" x="573" y="376"/><use href="#g13" x="579" y="376"/><use href="#g13" x="585" y="376"/><use href="#g13" x="591" y="376"/><use href="#g13" x="597" y="376"/><use href="#g13" x="603" y="376"/><use href="#g13" x="609" y="376"/><use href="#g13" x="615" y="376"/><use href="#g13" x="621" y="376"/><use href="#g13" x="627" y="376"/><use href="#g13" x="633" y="376"/><use href="#g13" x="639" y="376"/><use href="#g13" x="645" y="376"/><use href="#g13" x="651" y="376"/><use href="#g13" x="657" y="376"/><use href="#g13" x="663" y="376"/><use href="#g13" x="669" y="376"/><use href="#g13" x="675" y="376"/><use href="#g13" x="681" y="376"/><use href="#g13" x="687" y="376"/><use href="#g13" x="693" y="376"/><use href="#g13" x="699" y="376"/><use href="#g13" x="705" y="376"/><use href="#g13" x="711" y="376"/><use href="#g13" x="717" y="376"/><use href="#g13" x="723" y="376"/><use href="#g13" x="729" y="376"/><use href="#g81" x="21" y="388"/><use href="#g94" x="27" y="388"/><use href="#g2" x="39" y="388"/><use href="#g82" x="51" y="388"/><use href="#g81" x="63" y="388"/><use href="#g95" x="81" y="388"/><use href="#g96" x="93" y="388"/><use href="#g12" x="105" y="388"/><use href="#g10" x="111" y="388"/><use href="#g10" x="117" y="388"/><use href="#g97" x="123" y="388"/><use href="#g98" x="135" y="388"/><use href="#g81" x="165" y="388"/><use href="#g11" x="177" y="388"/><use href="#g9" x="183" y="388"/><use href="#g11" x="189" y="388"/><use href="#g9" x="195" y="388"/><use href="#g81" x="207" y="388"/><use href="#g9" x="213" y="388"/><use href="#g10" x="219" y="388"/><use href="#g11" x="225" y="388"/><use href="#g9" x="231" y="388"/><use href="#g11" x="237" y="388"/><use href="#g11" x="243" y="388"/><use href="#g11" x="249" y="388"/><use href="#g53" x="255" y="388"/><use href="#g81" x="261" y="388"/><use href="#g85" x="267" y="388"/><use href="#g81" x="291" y="388"/><use href="#g87" x="297" y="388"/><use href="#g81" x="327" y="388"/><use href="#g11" x="369" y="388"/><use href="#g81" x="375" y="388"/><use href="#g9" x="381" y="388"/><use href="#g11" x="387" y="388"/><use href="#g42" x="393" y="388"/><use href="#g27" x="399" y="388"/><use href="#g43" x="405" y="388"/><use href="#g10" x="411" y="388"/><use href="#g10" x="417" y="388"/><use href="#g10" x="423" y="388"/><use href="#g81" x="429" y="388"/><use href="#g9" x="435" y="388"/><use href="#g11" x="441" y="388"/><use href="#g12" x="447" y="388"/><use href="#g9" x="453" y="388"/><use href="#g43" x="459" y="388"/><use href="#g27" x="465" y="388"/><use href="#g10" x="471" y="388"/><use href="#g10" x="477" y="388"/><use href="#g81" x="483" y="388"/><use href="#g9" x="489" y="388"/><use href="#g11" x="495" y="388"/><use href="#g28" x="501" y="388"/><use href="#g10" x="507" y="388"/><use href="#g43" x="513" y="388"/><use href="#g9" x="519" y="388"/><use href="#g10" x="525" y="388"/><use href="#g10" x="531" y="388"/><use href="#g81" x="537" y="388"/><use href="#g13" x="549" y="388"/><use href="#g11" x="555" y="388"/><use href="#g10" x="561" y="388"/><use href="#g42" x="567" y="388"/><use href="#g28" x="573" y="388"/><use href="#g10" x="579" y="388"/><use href="#g43" x="585" y="388"/><use href="#g10" x="591" y="388"/><use href="#g10" x="597" y="388"/><use href="#g81" x="603" y="388"/><use href="#g9" x="621" y="388"/><use href="#g9" x="627" y="388"/><use href="#g26" x="633" y="388"/><use href="#g10" x="639" y="388"/><use href="#g43" x="645" y="388"/><use href="#g10" x="651" y="388"/><use href="#g10" x="657" y="388"/><use href="#g81" x="663" y="388"/><use href="#g11" x="669" y="388"/><use href="#g27" x="675" y="388"/><use href="#g10" x="681" y="388"/><use href="#g54" x="687" y="388"/><use href="#g11" x="693" y="388"/><use href="#g54" x="699" y="388"/><use href="#g43" x="705" y="388"/><use href="#g10" x="711" y="388"/><use href="#g10" x="717" y="388"/><use href="#g81" x="723" y="388"/><use href="#g81" x="21" y="400"/><use href="#g94" x="27" y="400"/><use href="#g2" x="39" y="400"/><use href="#g82" x="51" y="400"/><use href="#g81" x="63" y="400"/><use href="#g99" x="111" y="400"/><use href="#g81" x="165" y="400"/><use href="#g11" x="177" y="400"/><use href="#g12" x="183" y="400"/><use href="#g10" x="189" y="400"/><use href="#g9" x="195" y="400"/><use href="#g81" x="207" y="400"/><use href="#g9" x="213" y="400"/><use href="#g10" x="219" y="400"/><use href="#g11" x="225" y="400"/><use href="#g9" x="231" y="400"/><use href="#g11" x="237" y="400"/><use href="#g11" x="243" y="400"/><use href="#g9" x="249" y="400"/><use href="#g11" x="255" y="400"/><use href="#g81" x="261" y="400"/><use href="#g85" x="267" y="400"/><use href="#g81" x="291" y="400"/><use href="#g87" x="297" y="400"/><use href="#g81" x="327" y="400"/><use href="#g11" x="363" y="400"/><use href="#g10" x="369" y="400"/><use href="#g81" x="375" y="400"/><use href="#g54" x="381" y="400"/><use href="#g54" x="387" y="400"/><use href="#g53" x="393" y="400"/><use href="#g54" x="399" y="400"/><use href="#g10" x="405" y="400"/><use href="#g43" x="411" y="400"/><use href="#g10" x="417" y="400"/><use href="#g10" x="423" y="400"/><use href="#g10" x="429" y="400"/><use href="#g81" x="435" y="400"/><use href="#g54" x="441" y="400"/><use href="#g27" x="447" y="400"/><use href="#g12" x="453" y="400"/><use href="#g12" x="459" y="400"/><use href="#g10" x="465" y="400"/><use href="#g43" x="471" y="400"/><use href="#g10" x="477" y="400"/><use href="#g10" x="483" y="400"/><use href="#g10" x="489" y="400"/><use href="#g81" x="495" y="400"/><use href="#g54" x="501" y="400"/><use href="#g27" x="507" y="400"/><use href="#g53" x="513" y="400"/><use href="#g28" x="519" y="400"/><use href="#g10" x="525" y="400"/><use href="#g43" x="531" y="400"/><use href="#g10" x="537" y="400"/><use href="#g10" x="543" y="400"/><use href="#g10" x="549" y="400"/><use href="#g81" x="555" y="400"/><use href="#g28" x="573" y="400"/><use href="#g53" x="579" y="400"/><use href="#g54" x="585" y="400"/><use href="#g10" x="591" y="400"/><use href="#g10" x="597" y="400"/><use href="#g43" x="603" y="400"/><use href="#g10" x="609" y="400"/><use href="#g10" x="615" y="400"/><use href="#g81" x="621" y="400"/><use href="#g12" x="633" y="400"/><use href="#g10" x="639" y="400"/><use href="#g54" x="645" y="400"/><use href="#g10" x="651" y="400"/><use href="#g10" x="657" y="400"/><use href="#g43" x="663" y="400"/><use href="#g10" x="669" y="400"/><use href="#g10" x="675" y="400"/><use href="#g81" x="681" y="400"/><use href="#g28" x="687" y="400"/><use href="#g9" x="693" y="400"/><use href="#g42" x="699" y="400"/><use href="#g10" x="705" y="400"/><use href="#g54" x="711" y="400"/><use href="#g10" x="717" y="400"/><use href="#g43" x="723" y="400"/><use href="#g10" x="729" y="400"/><use href="#g10" x="735" y="400"/><use href="#g81" x="741" y="400"/><use href="#g13" x="21" y="412"/><use href="#g13" x="27" y="412"/><use href="#g13" x="33" y="412"/><use href="#g13" x="39" y="412"/><use href="#g13" x="45" y="412"/><use href="#g13" x="51" y="412"/><use href="#g13" x="57" y="412"/><use href="#g13" x="63" y="412"/><use href="#g13" x="69" y="412"/><use href="#g13" x="75" y="412"/><use href="#g13" x="81" y="412"/><use href="#g13" x="87" y="412"/><use href="#g13" x="93" y="412"/><use href="#g13" x="99" y="412"/><use href="#g13" x="105" y="412"/><use href="#g13" x="111" y="412"/><use href="#g13" x="117" y="412"/><use href="#g13" x="123" y="412"/><use href="#g13" x="129" y="412"/><use href="#g13" x="135" y="412"/><use href="#g13" x="141" y="412"/><use href="#g13" x="147" y="412"/><use href="#g13" x="153" y="412"/><use href="#g13" x="159" y="412"/><use href="#g13" x="165" y="412"/><use href="#g13" x="171" y="412"/><use href="#g13" x="177" y="412"/><use href="#g13" x="183" y="412"/><use href="#g13" x="189" y="412"/><use href="#g13" x="195" y="412"/><use href="#g13" x="201" y="412"/><use href="#g13" x="207" y="412"/><use href="#g13" x="213" y="412"/><use href="#g13" x="219" y="412"/><use href="#g13" x="225" y="412"/><use href="#g13" x="231" y="412"/><use href="#g13" x="237" y="412"/><use href="#g13" x="243" y="412"/><use href="#g13" x="249" y="412"/><use href="#g13" x="255" y="412"/><use href="#g13" x="261" y="412"/><use href="#g13" x="267" y="412"/><use href="#g13" x="273" y="412"/><use href="#g13" x="279" y="412"/><use href="#g13" x="285" y="412"/><use href="#g13" x="291" y="412"/><use href="#g13" x="297" y="412"/><use href="#g13" x="303" y="412"/><use href="#g13" x="309" y="412"/><use href="#g13" x="315" y="412"/><use href="#g13" x="321" y="412"/><use href="#g13" x="327" y="412"/><use href="#g13" x="333" y="412"/><use href="#g13" x="339" y="412"/><use href="#g13" x="345" y="412"/><use href="#g13" x="351" y="412"/><use href="#g13" x="357" y="412"/><use href="#g13" x="363" y="412"/><use href="#g13" x="369" y="412"/><use href="#g13" x="375" y="412"/><use href="#g13" x="381" y="412"/><use href="#g13" x="387" y="412"/><use href="#g13" x="393" y="412"/><use href="#g13" x="399" y="412"/><use href="#g13" x="405" y="412"/><use href="#g13" x="411" y="412"/><use href="#g13" x="417" y="412"/><use href="#g13" x="423" y="412"/><use href="#g13" x="429" y="412"/><use href="#g13" x="435" y="412"/><use href="#g13" x="441" y="412"/><use href="#g13" x="447" y="412"/><use href="#g13" x="453" y="412"/><use href="#g13" x="459" y="412"/><use href="#g13" x="465" y="412"/><use href="#g13" x="471" y="412"/><use href="#g13" x="477" y="412"/><use href="#g13" x="483" y="412"/><use href="#g13" x="489" y="412"/><use href="#g13" x="495" y="412"/><use href="#g13" x="501" y="412"/><use href="#g13" x="507" y="412"/><use href="#g13" x="513" y="412"/><use href="#g13" x="519" y="412"/><use href="#g13" x="525" y="412"/><use href="#g13" x="531" y="412"/><use href="#g13" x="537" y="412"/><use href="#g13" x="543" y="412"/><use href="#g13" x="549" y="412"/><use href="#g13" x="555" y="412"/><use href="#g13" x="561" y="412"/><use href="#g13" x="567" y="412"/><use href="#g13" x="573" y="412"/><use href="#g13" x="579" y="412"/><use href="#g13" x="585" y="412"/><use href="#g13" x="591" y="412"/><use href="#g13" x="597" y="412"/><use href="#g13" x="603" y="412"/><use href="#g13" x="609" y="412"/><use href="#g13" x="615" y="412"/><use href="#g13" x="621" y="412"/><use href="#g13" x="627" y="412"/><use href="#g13" x="633" y="412"/><use href="#g13" x="639" y="412"/><use href="#g13" x="645" y="412"/><use href="#g13" x="651" y="412"/><use href="#g13" x="657" y="412"/><use href="#g13" x="663" y="412"/><use href="#g13" x="669" y="412"/><use href="#g13" x="675" y="412"/><use href="#g13" x="681" y="412"/><use href="#g13" x="687" y="412"/><use href="#g13" x="693" y="412"/><use href="#g13" x="699" y="412"/><use href="#g13" x="705" y="412"/><use href="#g13" x="711" y="412"/><use href="#g13" x="717" y="412"/><use href="#g13" x="723" y="412"/><use href="#g13" x="729" y="412"/><use href="#g81" x="21" y="424"/><use href="#g100" x="27" y="424"/><use href="#g9" x="45" y="424"/><use href="#g101" x="51" y="424"/><use href="#g81" x="63" y="424"/><use href="#g81" x="165" y="424"/><use href="#g81" x="207" y="424"/><use href="#g81" x="261" y="424"/><use href="#g81" x="297" y="424"/><use href="#g81" x="333" y="424"/><use href="#g11" x="369" y="424"/><use href="#g11" x="375" y="424"/><use href="#g81" x="381" y="424"/><use href="#g81" x="435" y="424"/><use href="#g81" x="489" y="424"/><use href="#g81" x="543" y="424"/><use href="#g12" x="561" y="424"/><use href="#g26" x="567" y="424"/><use href="#g42" x="573" y="424"/><use href="#g27" x="579" y="424"/><use href="#g10" x="585" y="424"/><use href="#g43" x="591" y="424"/><use href="#g10" x="597" y="424"/><use href="#g10" x="603" y="424"/><use href="#g81" x="609" y="424"/><use href="#g12" x="621" y="424"/><use href="#g9" x="627" y="424"/><use href="#g42" x="633" y="424"/><use href="#g26" x="639" y="424"/><use href="#g10" x="645" y="424"/><use href="#g43" x="651" y="424"/><use href="#g10" x="657" y="424"/><use href="#g10" x="663" y="424"/><use href="#g81" x="669" y="424"/><use href="#g54" x="675" y="424"/><use href="#g26" x="681" y="424"/><use href="#g42" x="687" y="424"/><use href="#g54" x="693" y="424"/><use href="#g27" x="699" y="424"/><use href="#g54" x="705" y="424"/><use href="#g43" x="711" y="424"/><use href="#g10" x="717" y="424"/><use href="#g10" x="723" y="424"/><use href="#g81" x="729" y="424"/><use href="#g13" x="21" y="436"/><use href="#g13" x="27" y="436"/><use href="#g13" x="33" y="436"/><use href="#g13" x="39" y="436"/><use href="#g13" x="45" y="436"/><use href="#g13" x="51" y="436"/><use href="#g13" x="57" y="436"/><use href="#g13" x="63" y="436"/><use href="#g13" x="69" y="436"/><use href="#g13" x="75" y="436"/><use href="#g13" x="81" y="436"/><use href="#g13" x="87" y="436"/><use href="#g13" x="93" y="436"/><use href="#g13" x="99" y="436"/><use href="#g13" x="105" y="436"/><use href="#g13" x="111" y="436"/><use href="#g13" x="117" y="436"/><use href="#g13" x="123" y="436"/><use href="#g13" x="129" y="436"/><use href="#g13" x="135" y="436"/><use href="#g13" x="141" y="436"/><use href="#g13" x="147" y="436"/><use href="#g13" x="153" y="436"/><use href="#g13" x="159" y="436"/><use href="#g13" x="165" y="436"/><use href="#g13" x="171" y="436"/><use href="#g13" x="177" y="436"/><use href="#g13" x="183" y="436"/><use href="#g13" x="189" y="436"/><use href="#g13" x="195" y="436"/><use href="#g13" x="201" y="436"/><use href="#g13" x="207" y="436"/><use href="#g13" x="213" y="436"/><use href="#g13" x="219" y="436"/><use href="#g13" x="225" y="436"/><use href="#g13" x="231" y="436"/><use href="#g13" x="237" y="436"/><use href="#g13" x="243" y="436"/><use href="#g13" x="249" y="436"/><use href="#g13" x="255" y="436"/><use href="#g13" x="261" y="436"/><use href="#g13" x="267" y="436"/><use href="#g13" x="273" y="436"/><use href="#g13" x="279" y="436"/><use href="#g13" x="285" y="436"/><use href="#g13" x="291" y="436"/><use href="#g13" x="297" y="436"/><use href="#g13" x="303" y="436"/><use href="#g13" x="309" y="436"/><use href="#g13" x="315" y="436"/><use href="#g13" x="321" y="436"/><use href="#g13" x="327" y="436"/><use href="#g13" x="333" y="436"/><use href="#g13" x="339" y="436"/><use href="#g13" x="345" y="436"/><use href="#g13" x="351" y="436"/><use href="#g13" x="357" y="436"/><use href="#g13" x="363" y="436"/><use href="#g13" x="369" y="436"/><use href="#g13" x="375" y="436"/><use href="#g13" x="381" y="436"/><use href="#g13" x="387" y="436"/><use href="#g13" x="393" y="436"/><use href="#g13" x="399" y="436"/><use href="#g13" x="405" y="436"/><use href="#g13" x="411" y="436"/><use href="#g13" x="417" y="436"/><use href="#g13" x="423" y="436"/><use href="#g13" x="429" y="436"/><use href="#g13" x="435" y="436"/><use href="#g13" x="441" y="436"/><use href="#g13" x="447" y="436"/><use href="#g13" x="453" y="436"/><use href="#g13" x="459" y="436"/><use href="#g13" x="465" y="436"/><use href="#g13" x="471" y="436"/><use href="#g13" x="477" y="436"/><use href="#g13" x="483" y="436"/><use href="#g13" x="489" y="436"/><use href="#g13" x="495" y="436"/><use href="#g13" x="501" y="436"/><use href="#g13" x="507" y="436"/><use href="#g13" x="513" y="436"/><use href="#g13" x="519" y="436"/><use href="#g13" x="525" y="436"/><use href="#g13" x="531" y="436"/><use href="#g13" x="537" y="436"/><use href="#g13" x="543" y="436"/><use href="#g13" x="549" y="436"/><use href="#g13" x="555" y="436"/><use href="#g13" x="561" y="436"/><use href="#g13" x="567" y="436"/><use href="#g13" x="573" y="436"/><use href="#g13" x="579" y="436"/><use href="#g13" x="585" y="436"/><use href="#g13" x="591" y="436"/><use href="#g13" x="597" y="436"/><use href="#g13" x="603" y="436"/><use href="#g13" x="609" y="436"/><use href="#g13" x="615" y="436"/><use href="#g13" x="621" y="436"/><use href="#g13" x="627" y="436"/><use href="#g13" x="633" y="436"/><use href="#g13" x="639" y="436"/><use href="#g13" x="645" y="436"/><use href="#g13" x="651" y="436"/><use href="#g13" x="657" y="436"/><use href="#g13" x="663" y="436"/><use href="#g13" x="669" y="436"/><use href="#g13" x="675" y="436"/><use href="#g13" x="681" y="436"/><use href="#g13" x="687" y="436"/><use href="#g13" x="693" y="436"/><use href="#g13" x="699" y="436"/><use href="#g13" x="705" y="436"/><use href="#g13" x="711" y="436"/><use href="#g13" x="717" y="436"/><use href="#g13" x="723" y="436"/><use href="#g13" x="729" y="436"/><use href="#g67" x="255" y="460"/><use href="#g58" x="267" y="460"/><use href="#g102" x="279" y="460"/><use href="#g103" x="291" y="460"/><use href="#g13" x="21" y="472"/><use href="#g13" x="27" y="472"/><use href="#g13" x="33" y="472"/><use href="#g13" x="39" y="472"/><use href="#g13" x="45" y="472"/><use href="#g13" x="51" y="472"/><use href="#g13" x="57" y="472"/><use href="#g13" x="63" y="472"/><use href="#g13" x="69" y="472"/><use href="#g13" x="75" y="472"/><use href="#g13" x="81" y="472"/><use href="#g13" x="87" y="472"/><use href="#g13" x="93" y="472"/><use href="#g13" x="99" y="472"/><use href="#g13" x="105" y="472"/><use href="#g13" x="111" y="472"/><use href="#g13" x="117" y="472"/><use href="#g13" x="123" y="472"/><use href="#g13" x="129" y="472"/><use href="#g13" x="135" y="472"/><use href="#g13" x="141" y="472"/><use href="#g13" x="147" y="472"/><use href="#g13" x="153" y="472"/><use href="#g13" x="159" y="472"/><use href="#g13" x="165" y="472"/><use href="#g13" x="171" y="472"/><use href="#g13" x="177" y="472"/><use href="#g13" x="183" y="472"/><use href="#g13" x="189" y="472"/><use href="#g13" x="195" y="472"/><use href="#g13" x="201" y="472"/><use href="#g13" x="207" y="472"/><use href="#g13" x="213" y="472"/><use href="#g13" x="219" y="472"/><use href="#g13" x="225" y="472"/><use href="#g13" x="231" y="472"/><use href="#g13" x="237" y="472"/><use href="#g13" x="243" y="472"/><use href="#g13" x="249" y="472"/><use href="#g13" x="255" y="472"/><use href="#g13" x="261" y="472"/><use href="#g13" x="267" y="472"/><use href="#g13" x="273" y="472"/><use href="#g13" x="279" y="472"/><use href="#g13" x="285" y="472"/><use href="#g13" x="291" y="472"/><use href="#g13" x="297" y="472"/><use href="#g13" x="303" y="472"/><use href="#g13" x="309" y="472"/><use href="#g13" x="315" y="472"/><use href="#g13" x="321" y="472"/><use href="#g13" x="327" y="472"/><use href="#g13" x="333" y="472"/><use href="#g13" x="339" y="472"/><use href="#g13" x="345" y="472"/><use href="#g13" x="351" y="472"/><use href="#g13" x="357" y="472"/><use href="#g13" x="363" y="472"/><use href="#g13" x="369" y="472"/><use href="#g13" x="375" y="472"/><use href="#g13" x="381" y="472"/><use href="#g13" x="387" y="472"/><use href="#g13" x="393" y="472"/><use href="#g13" x="399" y="472"/><use href="#g13" x="405" y="472"/><use href="#g13" x="411" y="472"/><use href="#g13" x="417" y="472"/><use href="#g13" x="423" y="472"/><use href="#g13" x="429" y="472"/><use href="#g13" x="435" y="472"/><use href="#g13" x="441" y="472"/><use href="#g13" x="447" y="472"/><use href="#g13" x="453" y="472"/><use href="#g13" x="459" y="472"/><use href="#g13" x="465" y="472"/><use href="#g13" x="471" y="472"/><use href="#g13" x="477" y="472"/><use href="#g13" x="483" y="472"/><use href="#g13" x="489" y="472"/><use href="#g13" x="495" y="472"/><use href="#g13" x="501" y="472"/><use href="#g13" x="507" y="472"/><use href="#g13" x="513" y="472"/><use href="#g13" x="519" y="472"/><use href="#g13" x="525" y="472"/><use href="#g13" x="531" y="472"/><use href="#g13" x="537" y="472"/><use href="#g13" x="543" y="472"/><use href="#g13" x="549" y="472"/><use href="#g13" x="555" y="472"/><use href="#g13" x="561" y="472"/><use href="#g13" x="567" y="472"/><use href="#g13" x="573" y="472"/><use href="#g13" x="579" y="472"/><use href="#g13" x="585" y="472"/><use href="#g13" x="591" y="472"/><use href="#g13" x="597" y="472"/><use href="#g13" x="603" y="472"/><use href="#g13" x="609" y="472"/><use href="#g13" x="615" y="472"/><use href="#g13" x="621" y="472"/><use href="#g13" x="627" y="472"/><use href="#g13" x="633" y="472"/><use href="#g13" x="639" y="472"/><use href="#g13" x="645" y="472"/><use href="#g13" x="651" y="472"/><use href="#g13" x="657" y="472"/><use href="#g13" x="663" y="472"/><use href="#g13" x="669" y="472"/><use href="#g13" x="675" y="472"/><use href="#g13" x="681" y="472"/><use href="#g13" x="687" y="472"/><use href="#g13" x="693" y="472"/><use href="#g13" x="699" y="472"/><use href="#g13" x="705" y="472"/><use href="#g13" x="711" y="472"/><use href="#g13" x="717" y="472"/><use href="#g13" x="723" y="472"/><use href="#g13" x="729" y="472"/><use href="#g81" x="21" y="484"/><use href="#g83" x="63" y="484"/><use href="#g37" x="75" y="484"/><use href="#g81" x="123" y="484"/><use href="#g14" x="129" y="484"/><use href="#g44" x="141" y="484"/><use href="#g2" x="153" y="484"/><use href="#g81" x="165" y="484"/><use href="#g87" x="177" y="484"/><use href="#g67" x="189" y="484"/><use href="#g81" x="207" y="484"/><use href="#g87" x="231" y="484"/><use href="#g104" x="243" y="484"/><use href="#g90" x="255" y="484"/><use href="#g81" x="279" y="484"/><use href="#g88" x="291" y="484"/><use href="#g67" x="303" y="484"/><use href="#g81" x="321" y="484"/><use href="#g88" x="345" y="484"/><use href="#g104" x="357" y="484"/><use href="#g90" x="369" y="484"/><use href="#g81" x="399" y="484"/><use href="#g91" x="417" y="484"/><use href="#g16" x="429" y="484"/><use href="#g17" x="441" y="484"/><use href="#g81" x="465" y="484"/><use href="#g105" x="483" y="484"/><use href="#g16" x="495" y="484"/><use href="#g17" x="507" y="484"/><use href="#g81" x="531" y="484"/><use href="#g67" x="537" y="484"/><use href="#g58" x="549" y="484"/><use href="#g20" x="561" y="484"/><use href="#g21" x="573" y="484"/><use href="#g59" x="585" y="484"/><use href="#g60" x="597" y="484"/><use href="#g81" x="609" y="484"/><use href="#g48" x="621" y="484"/><use href="#g49" x="633" y="484"/><use href="#g33" x="645" y="484"/><use href="#g73" x="657" y="484"/><use href="#g56" x="669" y="484"/><use href="#g81" x="687" y="484"/><use href="#g85" x="693" y="484"/><use href="#g48" x="705" y="484"/><use href="#g81" x="729" y="484"/><use href="#g13" x="21" y="496"/><use href="#g13" x="27" y="496"/><use href="#g13" x="33" y="496"/><use href="#g13" x="39" y="496"/><use href="#g13" x="45" y="496"/><use href="#g13" x="51" y="496"/><use href="#g13" x="57" y="496"/><use href="#g13" x="63" y="496"/><use href="#g13" x="69" y="496"/><use href="#g13" x="75" y="496"/><use href="#g13" x="81" y="496"/><use href="#g13" x="87" y="496"/><use href="#g13" x="93" y="496"/><use href="#g13" x="99" y="496"/><use href="#g13" x="105" y="496"/><use href="#g13" x="111" y="496"/><use href="#g13" x="117" y="496"/><use href="#g13" x="123" y="496"/><use href="#g13" x="129" y="496"/><use href="#g13" x="135" y="496"/><use href="#g13" x="141" y="496"/><use href="#g13" x="147" y="496"/><use href="#g13" x="153" y="496"/><use href="#g13" x="159" y="496"/><use href="#g13" x="165" y="496"/><use href="#g13" x="171" y="496"/><use href="#g13" x="177" y="496"/><use href="#g13" x="183" y="496"/><use href="#g13" x="189" y="496"/><use href="#g13" x="195" y="496"/><use href="#g13" x="201" y="496"/><use href="#g13" x="207" y="496"/><use href="#g13" x="213" y="496"/><use href="#g13" x="219" y="496"/><use href="#g13" x="225" y="496"/><use href="#g13" x="231" y="496"/><use href="#g13" x="237" y="496"/><use href="#g13" x="243" y="496"/><use href="#g13" x="249" y="496"/><use href="#g13" x="255" y="496"/><use href="#g13" x="261" y="496"/><use href="#g13" x="267" y="496"/><use href="#g13" x="273" y="496"/><use href="#g13" x="279" y="496"/><use href="#g13" x="285" y="496"/><use href="#g13" x="291" y="496"/><use href="#g13" x="297" y="496"/><use href="#g13" x="303" y="496"/><use href="#g13" x="309" y="496"/><use href="#g13" x="315" y="496"/><use href="#g13" x="321" y="496"/><use href="#g13" x="327" y="496"/><use href="#g13" x="333" y="496"/><use href="#g13" x="339" y="496"/><use href="#g13" x="345" y="496"/><use href="#g13" x="351" y="496"/><use href="#g13" x="357" y="496"/><use href="#g13" x="363" y="496"/><use href="#g13" x="369" y="496"/><use href="#g13" x="375" y="496"/><use href="#g13" x="381" y="496"/><use href="#g13" x="387" y="496"/><use href="#g13" x="393" y="496"/><use href="#g13" x="399" y="496"/><use href="#g13" x="405" y="496"/><use href="#g13" x="411" y="496"/><use href="#g13" x="417" y="496"/><use href="#g13" x="423" y="496"/><use href="#g13" x="429" y="496"/><use href="#g13" x="435" y="496"/><use href="#g13" x="441" y="496"/><use href="#g13" x="447" y="496"/><use href="#g13" x="453" y="496"/><use href="#g13" x="459" y="496"/><use href="#g13" x="465" y="496"/><use href="#g13" x="471" y="496"/><use href="#g13" x="477" y="496"/><use href="#g13" x="483" y="496"/><use href="#g13" x="489" y="496"/><use href="#g13" x="495" y="496"/><use href="#g13" x="501" y="496"/><use href="#g13" x="507" y="496"/><use href="#g13" x="513" y="496"/><use href="#g13" x="519" y="496"/><use href="#g13" x="525" y="496"/><use href="#g13" x="531" y="496"/><use href="#g13" x="537" y="496"/><use href="#g13" x="543" y="496"/><use href="#g13" x="549" y="496"/><use href="#g13" x="555" y="496"/><use href="#g13" x="561" y="496"/><use href="#g13" x="567" y="496"/><use href="#g13" x="573" y="496"/><use href="#g13" x="579" y="496"/><use href="#g13" x="585" y="496"/><use href="#g13" x="591" y="496"/><use href="#g13" x="597" y="496"/><use href="#g13" x="603" y="496"/><use href="#g13" x="609" y="496"/><use href="#g13" x="615" y="496"/><use href="#g13" x="621" y="496"/><use href="#g13" x="627" y="496"/><use href="#g13" x="633" y="496"/><use href="#g13" x="639" y="496"/><use href="#g13" x="645" y="496"/><use href="#g13" x="651" y="496"/><use href="#g13" x="657" y="496"/><use href="#g13" x="663" y="496"/><use href="#g13" x="669" y="496"/><use href="#g13" x="675" y="496"/><use href="#g13" x="681" y="496"/><use href="#g13" x="687" y="496"/><use href="#g13" x="693" y="496"/><use href="#g13" x="699" y="496"/><use href="#g13" x="705" y="496"/><use href="#g13" x="711" y="496"/><use href="#g13" x="717" y="496"/><use href="#g13" x="723" y="496"/><use href="#g13" x="729" y="496"/><use href="#g81" x="21" y="508"/><use href="#g95" x="39" y="508"/><use href="#g96" x="51" y="508"/><use href="#g12" x="63" y="508"/><use href="#g10" x="69" y="508"/><use href="#g10" x="75" y="508"/><use href="#g97" x="81" y="508"/><use href="#g98" x="93" y="508"/><use href="#g81" x="123" y="508"/><use href="#g11" x="129" y="508"/><use href="#g9" x="135" y="508"/><use href="#g11" x="141" y="508"/><use href="#g9" x="147" y="508"/><use href="#g81" x="177" y="508"/><use href="#g11" x="213" y="508"/><use href="#g81" x="219" y="508"/><use href="#g9" x="243" y="508"/><use href="#g11" x="249" y="508"/><use href="#g42" x="255" y="508"/><use href="#g27" x="261" y="508"/><use href="#g43" x="267" y="508"/><use href="#g10" x="273" y="508"/><use href="#g10" x="279" y="508"/><use href="#g10" x="285" y="508"/><use href="#g81" x="291" y="508"/><use href="#g10" x="327" y="508"/><use href="#g81" x="333" y="508"/><use href="#g10" x="381" y="508"/><use href="#g43" x="387" y="508"/><use href="#g10" x="393" y="508"/><use href="#g10" x="399" y="508"/><use href="#g10" x="405" y="508"/><use href="#g81" x="411" y="508"/><use href="#g9" x="429" y="508"/><use href="#g11" x="435" y="508"/><use href="#g12" x="441" y="508"/><use href="#g9" x="447" y="508"/><use href="#g43" x="453" y="508"/><use href="#g27" x="459" y="508"/><use href="#g10" x="465" y="508"/><use href="#g10" x="471" y="508"/><use href="#g81" x="477" y="508"/><use href="#g9" x="495" y="508"/><use href="#g11" x="501" y="508"/><use href="#g28" x="507" y="508"/><use href="#g10" x="513" y="508"/><use href="#g43" x="519" y="508"/><use href="#g9" x="525" y="508"/><use href="#g10" x="531" y="508"/><use href="#g10" x="537" y="508"/><use href="#g81" x="543" y="508"/><use href="#g9" x="579" y="508"/><use href="#g9" x="585" y="508"/><use href="#g26" x="591" y="508"/><use href="#g10" x="597" y="508"/><use href="#g43" x="603" y="508"/><use href="#g10" x="609" y="508"/><use href="#g10" x="615" y="508"/><use href="#g81" x="621" y="508"/><use href="#g11" x="645" y="508"/><use href="#g27" x="651" y="508"/><use href="#g10" x="657" y="508"/><use href="#g54" x="663" y="508"/><use href="#g11" x="669" y="508"/><use href="#g54" x="675" y="508"/><use href="#g43" x="681" y="508"/><use href="#g10" x="687" y="508"/><use href="#g10" x="693" y="508"/><use href="#g81" x="699" y="508"/><use href="#g85" x="705" y="508"/><use href="#g81" x="741" y="508"/><use href="#g81" x="21" y="520"/><use href="#g99" x="69" y="520"/><use href="#g81" x="123" y="520"/><use href="#g11" x="129" y="520"/><use href="#g12" x="135" y="520"/><use href="#g10" x="141" y="520"/><use href="#g9" x="147" y="520"/><use href="#g81" x="177" y="520"/><use href="#g11" x="207" y="520"/><use href="#g10" x="213" y="520"/><use href="#g81" x="219" y="520"/><use href="#g54" x="237" y="520"/><use href="#g54" x="243" y="520"/><use href="#g53" x="249" y="520"/><use href="#g54" x="255" y="520"/><use href="#g10" x="261" y="520"/><use href="#g43" x="267" y="520"/><use href="#g10" x="273" y="520"/><use href="#g10" x="279" y="520"/><use href="#g10" x="285" y="520"/><use href="#g81" x="291" y="520"/><use href="#g10" x="327" y="520"/><use href="#g81" x="333" y="520"/><use href="#g10" x="381" y="520"/><use href="#g43" x="387" y="520"/><use href="#g10" x="393" y="520"/><use href="#g10" x="399" y="520"/><use href="#g10" x="405" y="520"/><use href="#g81" x="411" y="520"/><use href="#g54" x="423" y="520"/><use href="#g27" x="429" y="520"/><use href="#g12" x="435" y="520"/><use href="#g12" x="441" y="520"/><use href="#g10" x="447" y="520"/><use href="#g43" x="453" y="520"/><use href="#g10" x="459" y="520"/><use href="#g10" x="465" y="520"/><use href="#g10" x="471" y="520"/><use href="#g81" x="477" y="520"/><use href="#g54" x="489" y="520"/><use href="#g27" x="495" y="520"/><use href="#g53" x="501" y="520"/><use href="#g28" x="507" y="520"/><use href="#g10" x="513" y="520"/><use href="#g43" x="519" y="520"/><use href="#g10" x="525" y="520"/><use href="#g10" x="531" y="520"/><use href="#g10" x="537" y="520"/><use href="#g81" x="543" y="520"/><use href="#g12" x="573" y="520"/><use href="#g10" x="579" y="520"/><use href="#g54" x="585" y="520"/><use href="#g10" x="591" y="520"/><use href="#g10" x="597" y="520"/><use href="#g43" x="603" y="520"/><use href="#g10" x="609" y="520"/><use href="#g10" x="615" y="520"/><use href="#g81" x="621" y="520"/><use href="#g28" x="645" y="520"/><use href="#g9" x="651" y="520"/><use href="#g42" x="657" y="520"/><use href="#g10" x="663" y="520"/><use href="#g54" x="669" y="520"/><use href="#g10" x="675" y="520"/><use href="#g43" x="681" y="520"/><use href="#g10" x="687" y="520"/><use href="#g10" x="693" y="520"/><use href="#g81" x="699" y="520"/><use href="#g85" x="705" y="520"/><use href="#g81" x="741" y="520"/><use href="#g13" x="21" y="532"/><use href="#g13" x="27" y="532"/><use href="#g13" x="33" y="532"/><use href="#g13" x="39" y="532"/><use href="#g13" x="45" y="532"/><use href="#g13" x="51" y="532"/><use href="#g13" x="57" y="532"/><use href="#g13" x="63" y="532"/><use href="#g13" x="69" y="532"/><use href="#g13" x="75" y="532"/><use href="#g13" x="81" y="532"/><use href="#g13" x="87" y="532"/><use href="#g13" x="93" y="532"/><use href="#g13" x="99" y="532"/><use href="#g13" x="105" y="532"/><use href="#g13" x="111" y="532"/><use href="#g13" x="117" y="532"/><use href="#g13" x="123" y="532"/><use href="#g13" x="129" y="532"/><use href="#g13" x="135" y="532"/><use href="#g13" x="141" y="532"/><use href="#g13" x="147" y="532"/><use href="#g13" x="153" y="532"/><use href="#g13" x="159" y="532"/><use href="#g13" x="165" y="532"/><use href="#g13" x="171" y="532"/><use href="#g13" x="177" y="532"/><use href="#g13" x="183" y="532"/><use href="#g13" x="189" y="532"/><use href="#g13" x="195" y="532"/><use href="#g13" x="201" y="532"/><use href="#g13" x="207" y="532"/><use href="#g13" x="213" y="532"/><use href="#g13" x="219" y="532"/><use href="#g13" x="225" y="532"/><use href="#g13" x="231" y="532"/><use href="#g13" x="237" y="532"/><use href="#g13" x="243" y="532"/><use href="#g13" x="249" y="532"/><use href="#g13" x="255" y="532"/><use href="#g13" x="261" y="532"/><use href="#g13" x="267" y="532"/><use href="#g13" x="273" y="532"/><use href="#g13" x="279" y="532"/><use href="#g13" x="285" y="532"/><use href="#g13" x="291" y="532"/><use href="#g13" x="297" y="532"/><use href="#g13" x="303" y="532"/><use href="#g13" x="309" y="532"/><use href="#g13" x="315" y="532"/><use href="#g13" x="321" y="532"/><use href="#g13" x="327" y="532"/><use href="#g13" x="333" y="532"/><use href="#g13" x="339" y="532"/><use href="#g13" x="345" y="532"/><use href="#g13" x="351" y="532"/><use href="#g13" x="357" y="532"/><use href="#g13" x="363" y="532"/><use href="#g13" x="369" y="532"/><use href="#g13" x="375" y="532"/><use href="#g13" x="381" y="532"/><use href="#g13" x="387" y="532"/><use href="#g13" x="393" y="532"/><use href="#g13" x="399" y="532"/><use href="#g13" x="405" y="532"/><use href="#g13" x="411" y="532"/><use href="#g13" x="417" y="532"/><use href="#g13" x="423" y="532"/><use href="#g13" x="429" y="532"/><use href="#g13" x="435" y="532"/><use href="#g13" x="441" y="532"/><use href="#g13" x="447" y="532"/><use href="#g13" x="453" y="532"/><use href="#g13" x="459" y="532"/><use href="#g13" x="465" y="532"/><use href="#g13" x="471" y="532"/><use href="#g13" x="477" y="532"/><use href="#g13" x="483" y="532"/><use href="#g13" x="489" y="532"/><use href="#g13" x="495" y="532"/><use href="#g13" x="501" y="532"/><use href="#g13" x="507" y="532"/><use href="#g13" x="513" y="532"/><use href="#g13" x="519" y="532"/><use href="#g13" x="525" y="532"/><use href="#g13" x="531" y="532"/><use href="#g13" x="537" y="532"/><use href="#g13" x="543" y="532"/><use href="#g13" x="549" y="532"/><use href="#g13" x="555" y="532"/><use href="#g13" x="561" y="532"/><use href="#g13" x="567" y="532"/><use href="#g13" x="573" y="532"/><use href="#g13" x="579" y="532"/><use href="#g13" x="585" y="532"/><use href="#g13" x="591" y="532"/><use href="#g13" x="597" y="532"/><use href="#g13" x="603" y="532"/><use href="#g13" x="609" y="532"/><use href="#g13" x="615" y="532"/><use href="#g13" x="621" y="532"/><use href="#g13" x="627" y="532"/><use href="#g13" x="633" y="532"/><use href="#g13" x="639" y="532"/><use href="#g13" x="645" y="532"/><use href="#g13" x="651" y="532"/><use href="#g13" x="657" y="532"/><use href="#g13" x="663" y="532"/><use href="#g13" x="669" y="532"/><use href="#g13" x="675" y="532"/><use href="#g13" x="681" y="532"/><use href="#g13" x="687" y="532"/><use href="#g13" x="693" y="532"/><use href="#g13" x="699" y="532"/><use href="#g13" x="705" y="532"/><use href="#g13" x="711" y="532"/><use href="#g13" x="717" y="532"/><use href="#g13" x="723" y="532"/><use href="#g13" x="729" y="532"/><use href="#g81" x="21" y="544"/><use href="#g100" x="27" y="544"/><use href="#g9" x="45" y="544"/><use href="#g101" x="51" y="544"/><use href="#g81" x="123" y="544"/><use href="#g81" x="165" y="544"/><use href="#g11" x="195" y="544"/><use href="#g11" x="201" y="544"/><use href="#g81" x="207" y="544"/><use href="#g81" x="279" y="544"/><use href="#g10" x="315" y="544"/><use href="#g81" x="321" y="544"/><use href="#g81" x="399" y="544"/><use href="#g81" x="465" y="544"/><use href="#g81" x="531" y="544"/><use href="#g12" x="561" y="544"/><use href="#g9" x="567" y="544"/><use href="#g42" x="573" y="544"/><use href="#g26" x="579" y="544"/><use href="#g10" x="585" y="544"/><use href="#g43" x="591" y="544"/><use href="#g10" x="597" y="544"/><use href="#g10" x="603" y="544"/><use href="#g81" x="609" y="544"/><use href="#g54" x="633" y="544"/><use href="#g26" x="639" y="544"/><use href="#g42" x="645" y="544"/><use href="#g54" x="651" y="544"/><use href="#g27" x="657" y="544"/><use href="#g54" x="663" y="544"/><use href="#g43" x="669" y="544"/><use href="#g10" x="675" y="544"/><use href="#g10" x="681" y="544"/><use href="#g81" x="687" y="544"/><use href="#g81" x="729" y="544"/><use href="#g13" x="21" y="556"/><use href="#g13" x="27" y="556"/><use href="#g13" x="33" y="556"/><use href="#g13" x="39" y="556"/><use href="#g13" x="45" y="556"/><use href="#g13" x="51" y="556"/><use href="#g13" x="57" y="556"/><use href="#g13" x="63" y="556"/><use href="#g13" x="69" y="556"/><use href="#g13" x="75" y="556"/><use href="#g13" x="81" y="556"/><use href="#g13" x="87" y="556"/><use href="#g13" x="93" y="556"/><use href="#g13" x="99" y="556"/><use href="#g13" x="105" y="556"/><use href="#g13" x="111" y="556"/><use href="#g13" x="117" y="556"/><use href="#g13" x="123" y="556"/><use href="#g13" x="129" y="556"/><use href="#g13" x="135" y="556"/><use href="#g13" x="141" y="556"/><use href="#g13" x="147" y="556"/><use href="#g13" x="153" y="556"/><use href="#g13" x="159" y="556"/><use href="#g13" x="165" y="556"/><use href="#g13" x="171" y="556"/><use href="#g13" x="177" y="556"/><use href="#g13" x="183" y="556"/><use href="#g13" x="189" y="556"/><use href="#g13" x="195" y="556"/><use href="#g13" x="201" y="556"/><use href="#g13" x="207" y="556"/><use href="#g13" x="213" y="556"/><use href="#g13" x="219" y="556"/><use href="#g13" x="225" y="556"/><use href="#g13" x="231" y="556"/><use href="#g13" x="237" y="556"/><use href="#g13" x="243" y="556"/><use href="#g13" x="249" y="556"/><use href="#g13" x="255" y="556"/><use href="#g13" x="261" y="556"/><use href="#g13" x="267" y="556"/><use href="#g13" x="273" y="556"/><use href="#g13" x="279" y="556"/><use href="#g13" x="285" y="556"/><use href="#g13" x="291" y="556"/><use href="#g13" x="297" y="556"/><use href="#g13" x="303" y="556"/><use href="#g13" x="309" y="556"/><use href="#g13" x="315" y="556"/><use href="#g13" x="321" y="556"/><use href="#g13" x="327" y="556"/><use href="#g13" x="333" y="556"/><use href="#g13" x="339" y="556"/><use href="#g13" x="345" y="556"/><use href="#g13" x="351" y="556"/><use href="#g13" x="357" y="556"/><use href="#g13" x="363" y="556"/><use href="#g13" x="369" y="556"/><use href="#g13" x="375" y="556"/><use href="#g13" x="381" y="556"/><use href="#g13" x="387" y="556"/><use href="#g13" x="393" y="556"/><use href="#g13" x="399" y="556"/><use href="#g13" x="405" y="556"/><use href="#g13" x="411" y="556"/><use href="#g13" x="417" y="556"/><use href="#g13" x="423" y="556"/><use href="#g13" x="429" y="556"/><use href="#g13" x="435" y="556"/><use href="#g13" x="441" y="556"/><use href="#g13" x="447" y="556"/><use href="#g13" x="453" y="556"/><use href="#g13" x="459" y="556"/><use href="#g13" x="465" y="556"/><use href="#g13" x="471" y="556"/><use href="#g13" x="477" y="556"/><use href="#g13" x="483" y="556"/><use href="#g13" x="489" y="556"/><use href="#g13" x="495" y="556"/><use href="#g13" x="501" y="556"/><use href="#g13" x="507" y="556"/><use href="#g13" x="513" y="556"/><use href="#g13" x="519" y="556"/><use href="#g13" x="525" y="556"/><use href="#g13" x="531" y="556"/><use href="#g13" x="537" y="556"/><use href="#g13" x="543" y="556"/><use href="#g13" x="549" y="556"/><use href="#g13" x="555" y="556"/><use href="#g13" x="561" y="556"/><use href="#g13" x="567" y="556"/><use href="#g13" x="573" y="556"/><use href="#g13" x="579" y="556"/><use href="#g13" x="585" y="556"/><use href="#g13" x="591" y="556"/><use href="#g13" x="597" y="556"/><use href="#g13" x="603" y="556"/><use href="#g13" x="609" y="556"/><use href="#g13" x="615" y="556"/><use href="#g13" x="621" y="556"/><use href="#g13" x="627" y="556"/><use href="#g13" x="633" y="556"/><use href="#g13" x="639" y="556"/><use href="#g13" x="645" y="556"/><use href="#g13" x="651" y="556"/><use href="#g13" x="657" y="556"/><use href="#g13" x="663" y="556"/><use href="#g13" x="669" y="556"/><use href="#g13" x="675" y="556"/><use href="#g13" x="681" y="556"/><use href="#g13" x="687" y="556"/><use href="#g13" x="693" y="556"/><use href="#g13" x="699" y="556"/><use href="#g13" x="705" y="556"/><use href="#g13" x="711" y="556"/><use href="#g13" x="717" y="556"/><use href="#g13" x="723" y="556"/><use href="#g13" x="729" y="556"/></g>
<g fill="#000"><use href="#g106" x="39" y="74"/><use href="#g107" x="51" y="74"/><use href="#g108" x="63" y="74"/><use href="#g109" x="75" y="74"/><use href="#g16" x="87" y="74"/><use href="#g17" x="99" y="74"/><use href="#g18" x="111" y="74"/></g><g fill="#0046D5"><use href="#g106" x="153" y="52"/><use href="#g107" x="165" y="52"/><use href="#g110" x="177" y="52"/><use href="#g111" x="189" y="52"/><use href="#g16" x="201" y="52"/><use href="#g17" x="213" y="52"/><use href="#g18" x="225" y="52"/></g><g fill="#000"><use href="#g106" x="169" y="74"/><use href="#g107" x="181" y="74"/><use href="#g31" x="193" y="74"/><use href="#g2" x="205" y="74"/></g><g fill="#000"><use href="#g9" x="237" y="73"/><use href="#g10" x="243" y="73"/><use href="#g11" x="249" y="73"/><use href="#g9" x="255" y="73"/><use href="#g11" x="261" y="73"/><use href="#g11" x="267" y="73"/><use href="#g12" x="273" y="73"/><use href="#g10" x="279" y="73"/></g><g fill="#000"><use href="#g106" x="419" y="74"/><use href="#g107" x="431" y="74"/></g><g fill="#000"><use href="#g48" x="559" y="75"/><use href="#g41" x="571" y="75"/><use href="#g112" x="583" y="75"/><use href="#g113" x="595" y="75"/><use href="#g114" x="607" y="75"/></g><g fill="#000"><use href="#g115" x="691" y="75"/><use href="#g50" x="703" y="75"/></g>
<rect x="219" y="66" width="1" height="2" fill="#000"/><rect x="219" y="71" width="1" height="2" fill="#000"/>
<rect x="419" y="75" width="12" height="1" fill="#000"/>
<g fill="#0A1E8C"><use href="#g116" x="27" y="22"/><use href="#g117" x="41" y="22"/><use href="#g118" x="55" y="22"/><use href="#g119" x="69" y="22"/><use href="#g120" x="83" y="22"/><use href="#g121" x="97" y="22"/><use href="#g118" x="111" y="22"/><use href="#g122" x="125" y="22"/></g><g fill="#fff"><use href="#g116" x="26" y="21"/><use href="#g117" x="40" y="21"/><use href="#g118" x="54" y="21"/><use href="#g119" x="68" y="21"/><use href="#g120" x="82" y="21"/><use href="#g121" x="96" y="21"/><use href="#g118" x="110" y="21"/><use href="#g122" x="124" y="21"/></g>
</svg>
<!-- callouts -->
<svg class="a" width="787" height="566">
<path d="M510.5 11.5h159a3 3 0 0 1 3 3v25a3 3 0 0 1 -3 3h-65l-8 13l-8-13h-78a3 3 0 0 1 -3-3v-25a3 3 0 0 1 3-3z" fill="#FFFF88" stroke="#FF0000" stroke-width="1.2"/>
<path d="M180.5 95.5h60.5l11-12.5v12.5h17.5a3 3 0 0 1 3 3v26a3 3 0 0 1 -3 3h-89a3 3 0 0 1 -3-3v-26a3 3 0 0 1 3-3z" fill="#FFFF88" stroke="#FF0000" stroke-width="1.2"/>
</svg>
<svg class="a" width="787" height="566" shape-rendering="crispEdges"><g fill="#0000FF"><use href="#g123" x="517" y="31"/><use href="#g124" x="530" y="31"/><use href="#g125" x="543" y="31"/><use href="#g126" x="556" y="31"/><use href="#g127" x="569" y="31"/><use href="#g128" x="582" y="31"/><use href="#g129" x="595" y="31"/><use href="#g130" x="608" y="31"/><use href="#g131" x="621" y="31"/><use href="#g132" x="634" y="31"/><use href="#g133" x="647" y="31"/><use href="#g134" x="184" y="115"/><use href="#g135" x="197" y="115"/><use href="#g136" x="210" y="115"/><use href="#g137" x="223" y="115"/><use href="#g138" x="236" y="115"/><use href="#g139" x="249" y="115"/></g></svg>
</body></html>
